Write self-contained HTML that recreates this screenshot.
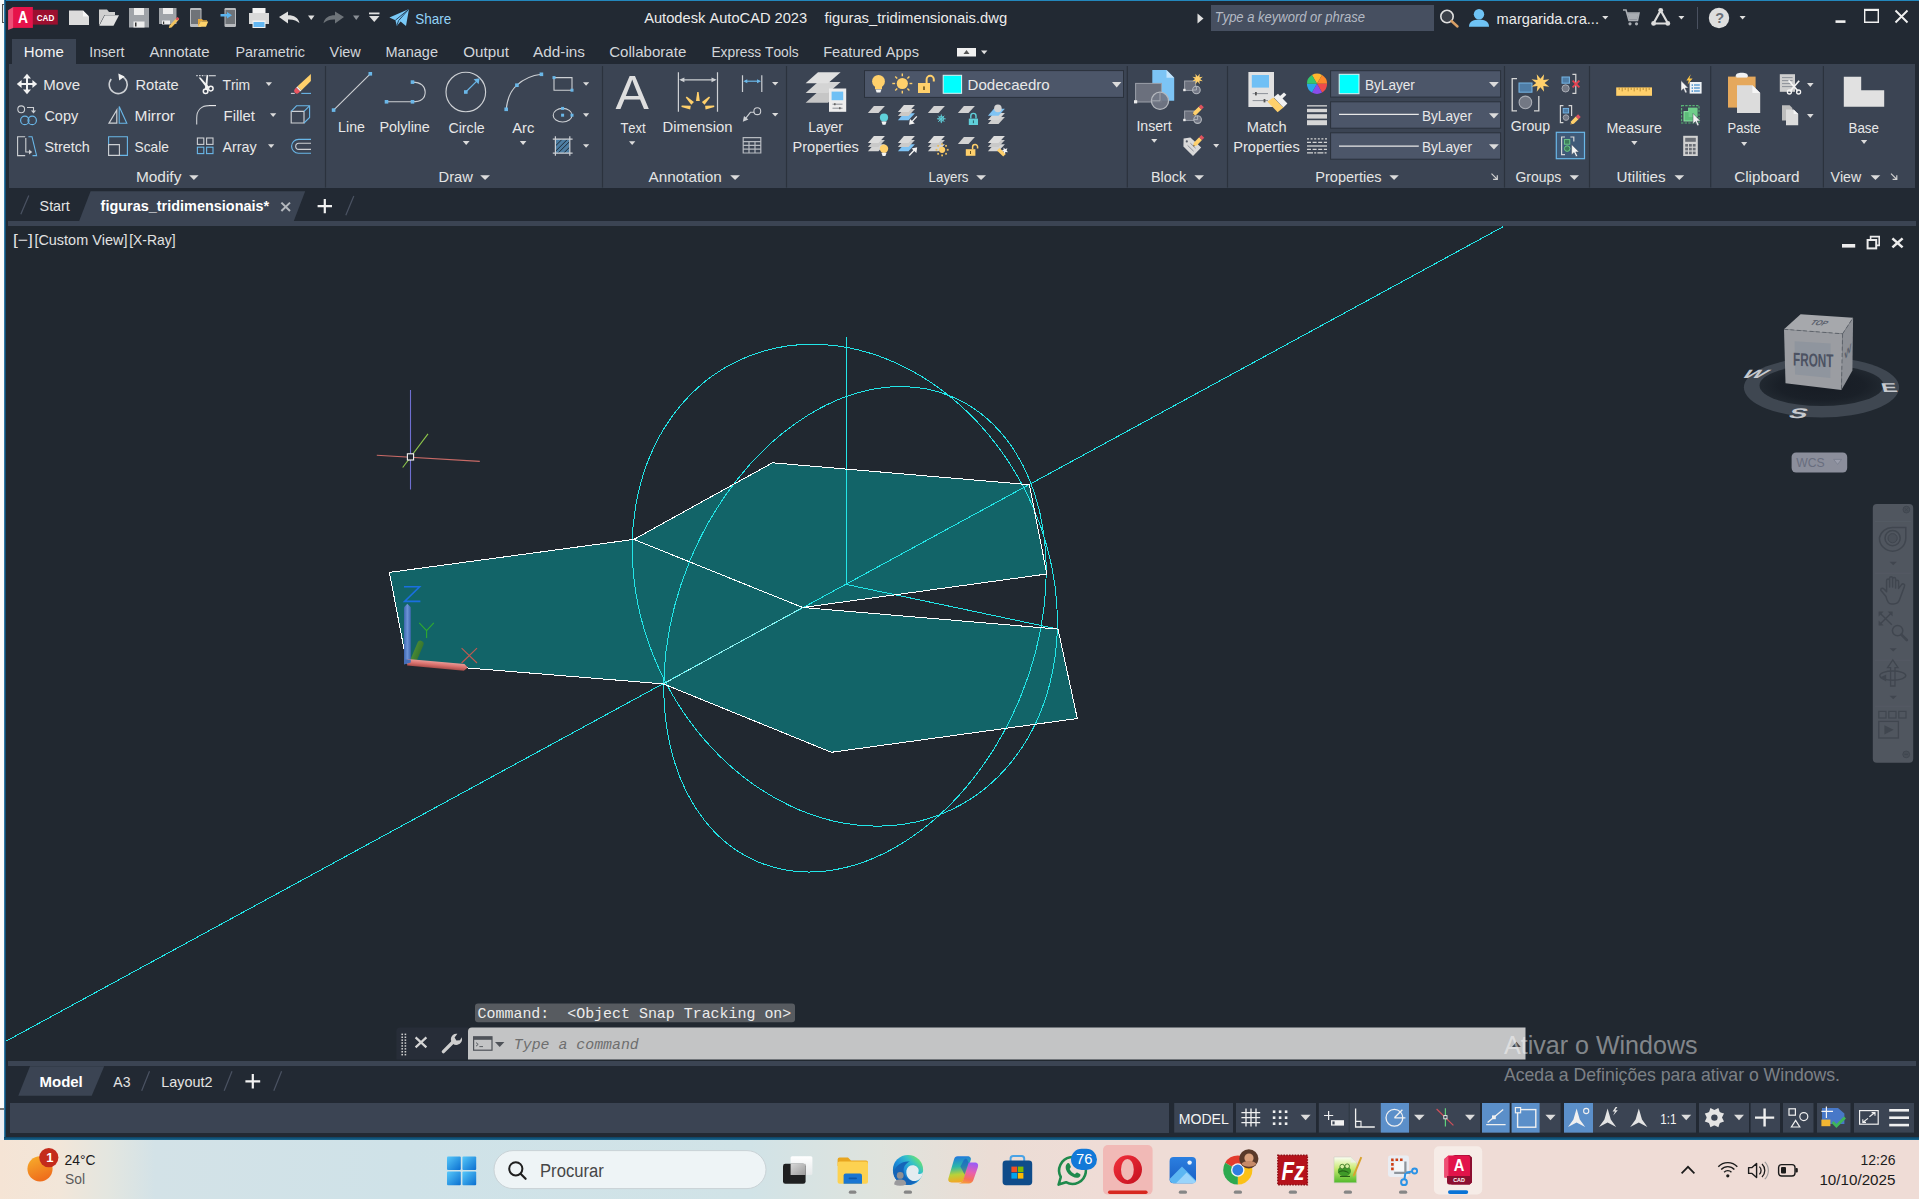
<!DOCTYPE html>
<html lang="en"><head><meta charset="utf-8"><title>Autodesk AutoCAD 2023 - figuras_tridimensionais.dwg</title>
<style>
html,body{margin:0;padding:0;background:#222933;overflow:hidden}
body{width:1919px;height:1199px;position:relative;font-family:'Liberation Sans',sans-serif;font-kerning:none}
div{position:absolute;box-sizing:border-box}
#ov{position:absolute;left:0;top:0}
#ov text{font-family:'Liberation Sans',sans-serif;white-space:pre}
#ov text.mono{font-family:'Liberation Mono',monospace}
</style></head><body>
<div id="win" style="left:0;top:0;width:1919px;height:1139px;background:#222933"></div>
<div id="leftstrip" style="left:0;top:0;width:4px;height:1140px;background:linear-gradient(180deg,#fbfbfb 0,#fbfbfb 1108px,#7a7a7a 1108px,#7a7a7a 1110px,#ededf1 1110px)"></div>
<div id="leftborder" style="left:4px;top:0;width:1.8px;height:1139px;background:linear-gradient(90deg,#4a94c2 0%,#15577f 55%,#0e3c5c 100%)"></div>
<div id="leftmark" style="left:1.5px;top:4px;width:2.5px;height:19px;border:1px solid #555;border-right:none;background:#e8e8e8"></div>
<div id="topborder" style="left:6px;top:0;width:1913px;height:1px;background:#2387bd"></div>
<div id="ribbon" style="left:9px;top:64px;width:1906px;height:124px;background:#3b4453"></div>
<div id="tabstrip" style="left:8px;top:221px;width:1908px;height:5px;background:#3b4453"></div>
<div id="canvas" style="left:6px;top:226px;width:1913px;height:835px;background:#212830"></div>
<div id="cmdstrip" style="left:8px;top:1061px;width:1908px;height:5px;background:#3b4453"></div>
<div id="status" style="left:10px;top:1103px;width:1159px;height:30px;background:#3b4453"></div>
<div id="botborder" style="left:4px;top:1137px;width:1915px;height:3px;background:linear-gradient(180deg,#0f3f5f,#12587f 60%,#1a6a94)"></div>
<div id="taskbar" style="left:0;top:1140px;width:1919px;height:59px;background:linear-gradient(90deg,#f5e4d5 0px,#f2e6d9 60px,#e3e6e0 110px,#d3e2e7 155px,#cfe2e8 400px,#d1e3e7 750px,#dfe3dd 880px,#ebddd5 990px,#efdcd6 1100px,#efdcd6 1919px)"></div>
<svg id="ov" width="1919" height="1199" viewBox="0 0 1919 1199">
<g id="titlebar"><rect x="32.9" y="9.8" width="24.9" height="14.8" fill="#9c0f2f"/><path d="M13 7H32.9V27.9H13Z" fill="#e6134a"/><path d="M8.1 10.2L13.1 7V27.9L8.1 30.1Z" fill="#ee4f77"/><text x="18" y="23" font-size="15.6" fill="#ffffff" font-weight="bold" textLength="10" lengthAdjust="spacingAndGlyphs">A</text><text x="36.7" y="21" font-size="9" fill="#ffffff" font-weight="bold" textLength="17.6" lengthAdjust="spacingAndGlyphs">CAD</text><path d="M69 10.5H83L89 16.5V25H69Z" fill="#dcdcdc"/><path d="M83 10.5L89 16.5H83Z" fill="#f6f6f6"/><path d="M99 9.5H107L109 12H115V15H104.5L99 25.5Z" fill="#d0d0d0"/><path d="M104.8 15.3H119L113.5 25.8H99.3Z" fill="#e0e0e0"/><path d="M129 8H149V27.5H129Z" fill="#9fa3a8"/><rect x="134" y="8" width="10" height="7" fill="#ededed"/><rect x="133.5" y="21.5" width="11" height="6" fill="#ededed"/><rect x="135" y="22.5" width="1.5" height="4" fill="#333"/><path d="M159 8H176.5V24H159Z" fill="#9fa3a8"/><rect x="163" y="8" width="10" height="6" fill="#ededed"/><rect x="162" y="20.5" width="8" height="4" fill="#ededed"/><rect x="163" y="21.5" width="1.2" height="2.5" fill="#333"/><path d="M169.5 25.5L177 17.5L179 19.5L171.5 27.5L168.8 28Z" fill="#f2c45f"/><path d="M175.5 19L177.6 17L179.3 18.6L177.3 20.6Z" fill="#e0525e"/><rect x="190" y="8" width="11.5" height="19" fill="#b9bbbf" rx="1.2"/><rect x="191" y="10" width="9.5" height="14" fill="#6f7378"/><path d="M198 19H202L203 20.2H207V21.5H200.5L198 26.8Z" fill="#e8a93a"/><path d="M200.7 21.6H208.2L206 26.8H198.2Z" fill="#ffd36b"/><rect x="224.5" y="8" width="11.5" height="19" fill="#b9bbbf" rx="1.2"/><rect x="225.5" y="10" width="9.5" height="14" fill="#6f7378"/><path d="M220.5 14H227V12L232 15.2L227 18.4V16.4H220.5Z" fill="#5ab4f0"/><rect x="252.5" y="8" width="13" height="6" fill="#f2f2f2"/><path d="M249 13H269V24H249Z" fill="#d9d9d9" /><rect x="252.5" y="20.5" width="13" height="7.5" fill="#f2f2f2"/><rect x="253.5" y="22" width="11" height="5" fill="#63b7f2"/><path d="M279 17L288 11.5V15.2C294 15.2 298.5 17.5 299.5 23.3C297 20.5 293.5 19.3 288 19.5V23.6Z" fill="#e0e0e0"/><path d="M308 15.6H314.5L311.25 20Z" fill="#e0e0e0"/><path d="M344 17L335 11.5V15.2C329 15.2 324.5 17.5 323.5 23.3C326 20.5 329.5 19.3 335 19.5V23.6Z" fill="#6d7379"/><path d="M353 15.6H359.5L356.25 20Z" fill="#8a8f96"/><rect x="369" y="12.5" width="10.5" height="1.8" fill="#e0e0e0"/><path d="M369 16H379.5L374.25 22Z" fill="#e0e0e0"/><path d="M389.4 17.6L409 8.9L406 26L400.6 21.4L396.8 26L395.4 20.2Z" fill="#79c9f7"/><path d="M395.4 20.2L408.6 9.4M396.8 25.6L398.6 20.6L408.6 9.4" fill="none" stroke="#1d3650" stroke-width="0.9"/><text x="415.2" y="23.6" font-size="15" fill="#93d3f8" textLength="36" lengthAdjust="spacingAndGlyphs">Share</text><text x="644.2" y="22.7" font-size="15" fill="#ececec" textLength="163" lengthAdjust="spacingAndGlyphs">Autodesk AutoCAD 2023</text><text x="824.6" y="22.7" font-size="15" fill="#ececec" textLength="182.6" lengthAdjust="spacingAndGlyphs">figuras_tridimensionais.dwg</text><path d="M1197.5 13.5L1203.5 18.5L1197.5 23.5Z" fill="#e0e0e0"/><rect x="1211" y="5" width="223" height="26" fill="#464f60"/><text x="1214.7" y="22.2" font-size="14.5" fill="#b4bac4" font-style="italic" textLength="150.3" lengthAdjust="spacingAndGlyphs">Type a keyword or phrase</text><circle cx="1447" cy="16.5" r="6.2" fill="#3b4049" stroke="#e0e0e0" stroke-width="1.6"/><line x1="1451.5" y1="21" x2="1457.5" y2="26.5" stroke="#d9a066" stroke-width="2.4" stroke-linecap="round"/><circle cx="1479" cy="14.2" r="5.2" fill="#6fc3f5"/><path d="M1469 26.7C1469 21.5 1473 19.8 1479 19.8C1485 19.8 1489 21.5 1489 26.7Z" fill="#6fc3f5"/><text x="1496.6" y="23.8" font-size="15" fill="#ececec" textLength="102.4" lengthAdjust="spacingAndGlyphs">margarida.cra...</text><path d="M1602.2 16H1608.4L1605.3 19.6Z" fill="#e0e0e0"/><path d="M1623 10H1626L1629 20.5H1637.5L1639 13H1627.2" fill="none" stroke="#a9adb3" stroke-width="1.6"/><path d="M1627.4 13.2H1638.6L1637.3 19.8H1629.2Z" fill="#a9adb3"/><circle cx="1630" cy="23.8" r="1.6" fill="#a9adb3"/><circle cx="1636.5" cy="23.8" r="1.6" fill="#a9adb3"/><path d="M1660.7 10.5L1668 23.5H1653.4Z" fill="none" stroke="#dcdcdc" stroke-width="2.2" stroke-linejoin="round"/><circle cx="1660.7" cy="10.3" r="2.4" fill="#dcdcdc"/><circle cx="1653.6" cy="23.4" r="2.4" fill="#dcdcdc"/><circle cx="1667.8" cy="23.4" r="2.4" fill="#dcdcdc"/><path d="M1678.4 16H1684.4L1681.4 19.6Z" fill="#e0e0e0"/><line x1="1697.5" y1="7" x2="1697.5" y2="29" stroke="#4a5160" stroke-width="1"/><circle cx="1719" cy="18" r="10.2" fill="#dedede"/><text x="1715.2" y="23" font-size="14.5" fill="#6a6f78" font-weight="bold">?</text><path d="M1739.6 16H1745.6L1742.6 19.6Z" fill="#e0e0e0"/><rect x="1835.5" y="20.3" width="10" height="2.6" fill="#f0f0f0"/><path d="M1864.7 10H1878.3V22.3H1864.7Z" fill="none" stroke="#f0f0f0" stroke-width="1.4"/><rect x="1864" y="8.8" width="15" height="2.2" fill="#f0f0f0"/><path d="M1895.5 10.5L1907.5 22.5M1907.5 10.5L1895.5 22.5" fill="none" stroke="#f0f0f0" stroke-width="1.9"/></g>
<g id="ribbon"><rect x="12" y="39" width="64" height="25" fill="#3b4453"/><text x="23.8" y="56.6" font-size="15" fill="#f4f4f4" textLength="40" lengthAdjust="spacingAndGlyphs">Home</text><text x="89.3" y="56.6" font-size="15" fill="#d2d6db" textLength="35.2" lengthAdjust="spacingAndGlyphs">Insert</text><text x="149.5" y="56.6" font-size="15" fill="#d2d6db" textLength="60" lengthAdjust="spacingAndGlyphs">Annotate</text><text x="235.5" y="56.6" font-size="15" fill="#d2d6db" textLength="69.5" lengthAdjust="spacingAndGlyphs">Parametric</text><text x="329.5" y="56.6" font-size="15" fill="#d2d6db" textLength="31.3" lengthAdjust="spacingAndGlyphs">View</text><text x="385.5" y="56.6" font-size="15" fill="#d2d6db" textLength="52.5" lengthAdjust="spacingAndGlyphs">Manage</text><text x="463.3" y="56.6" font-size="15" fill="#d2d6db" textLength="45.6" lengthAdjust="spacingAndGlyphs">Output</text><text x="533.1" y="56.6" font-size="15" fill="#d2d6db" textLength="51.9" lengthAdjust="spacingAndGlyphs">Add-ins</text><text x="609.2" y="56.6" font-size="15" fill="#d2d6db" textLength="77.1" lengthAdjust="spacingAndGlyphs">Collaborate</text><text x="711.4" y="56.6" font-size="15" fill="#d2d6db" textLength="87.3" lengthAdjust="spacingAndGlyphs">Express Tools</text><text x="823.2" y="56.6" font-size="15" fill="#d2d6db" textLength="95.8" lengthAdjust="spacingAndGlyphs">Featured Apps</text><rect x="957" y="48" width="19" height="8.5" fill="#f0f0f0"/><path d="M963.5 54L966.5 50L969.5 54Z" fill="#555"/><path d="M981 50.5H987.4L984.2 54.2Z" fill="#e0e0e0"/><line x1="325.5" y1="66" x2="325.5" y2="187.6" stroke="#2b323d" stroke-width="1.2"/><line x1="602.5" y1="66" x2="602.5" y2="187.6" stroke="#2b323d" stroke-width="1.2"/><line x1="786.5" y1="66" x2="786.5" y2="187.6" stroke="#2b323d" stroke-width="1.2"/><line x1="1127.3" y1="66" x2="1127.3" y2="187.6" stroke="#2b323d" stroke-width="1.2"/><line x1="1227.5" y1="66" x2="1227.5" y2="187.6" stroke="#2b323d" stroke-width="1.2"/><line x1="1504.5" y1="66" x2="1504.5" y2="187.6" stroke="#2b323d" stroke-width="1.2"/><line x1="1589.5" y1="66" x2="1589.5" y2="187.6" stroke="#2b323d" stroke-width="1.2"/><line x1="1710.7" y1="66" x2="1710.7" y2="187.6" stroke="#2b323d" stroke-width="1.2"/><line x1="1823.4" y1="66" x2="1823.4" y2="187.6" stroke="#2b323d" stroke-width="1.2"/><text x="135.9" y="181.6" font-size="15" fill="#e4e4e4" textLength="45.5" lengthAdjust="spacingAndGlyphs">Modify</text><path d="M189.2 175.2H198.6L193.9 180Z" fill="#dcdcdc"/><text x="438.6" y="181.6" font-size="15" fill="#e4e4e4" textLength="34.3" lengthAdjust="spacingAndGlyphs">Draw</text><path d="M480.2 175.2H490L485.1 180Z" fill="#dcdcdc"/><text x="648.5" y="181.6" font-size="15" fill="#e4e4e4" textLength="73.2" lengthAdjust="spacingAndGlyphs">Annotation</text><path d="M730.2 175.2H740L735.1 180Z" fill="#dcdcdc"/><text x="928.6" y="181.6" font-size="15" fill="#e4e4e4" textLength="39.9" lengthAdjust="spacingAndGlyphs">Layers</text><path d="M976.2 175.2H986L981.1 180Z" fill="#dcdcdc"/><text x="1151" y="181.6" font-size="15" fill="#e4e4e4" textLength="35.2" lengthAdjust="spacingAndGlyphs">Block</text><path d="M1194.4 175.2H1204L1199.2 180Z" fill="#dcdcdc"/><text x="1315.3" y="181.6" font-size="15" fill="#e4e4e4" textLength="66.3" lengthAdjust="spacingAndGlyphs">Properties</text><path d="M1389.4 175.2H1398.8L1394.1 180Z" fill="#dcdcdc"/><text x="1515.4" y="181.6" font-size="15" fill="#e4e4e4" textLength="46" lengthAdjust="spacingAndGlyphs">Groups</text><path d="M1569.6 175.2H1579L1574.3 180Z" fill="#dcdcdc"/><text x="1616.6" y="181.6" font-size="15" fill="#e4e4e4" textLength="49.1" lengthAdjust="spacingAndGlyphs">Utilities</text><path d="M1674.5 175.2H1684.2L1679.35 180Z" fill="#dcdcdc"/><text x="1734.2" y="181.6" font-size="15" fill="#e4e4e4" textLength="65.4" lengthAdjust="spacingAndGlyphs">Clipboard</text><text x="1830.5" y="181.6" font-size="15" fill="#e4e4e4" textLength="30.7" lengthAdjust="spacingAndGlyphs">View</text><path d="M1870.6 175.2H1880.3L1875.45 180Z" fill="#dcdcdc"/><path d="M1491.5 173.6L1497.0 179.1M1493.1 179.4H1497.3V175.2" fill="none" stroke="#d0d0d0" stroke-width="1.2"/><path d="M1891 173.6L1896.5 179.1M1892.6 179.4H1896.8V175.2" fill="none" stroke="#d0d0d0" stroke-width="1.2"/><text x="43.3" y="89.8" font-size="15" fill="#e8e8e8" textLength="36.7" lengthAdjust="spacingAndGlyphs">Move</text><text x="44.4" y="120.7" font-size="15" fill="#e8e8e8" textLength="33.8" lengthAdjust="spacingAndGlyphs">Copy</text><text x="44.4" y="151.7" font-size="15" fill="#e8e8e8" textLength="45.4" lengthAdjust="spacingAndGlyphs">Stretch</text><text x="135.5" y="89.8" font-size="15" fill="#e8e8e8" textLength="43.3" lengthAdjust="spacingAndGlyphs">Rotate</text><text x="134.5" y="120.7" font-size="15" fill="#e8e8e8" textLength="40.5" lengthAdjust="spacingAndGlyphs">Mirror</text><text x="134.5" y="151.7" font-size="15" fill="#e8e8e8" textLength="34.4" lengthAdjust="spacingAndGlyphs">Scale</text><text x="222.4" y="89.8" font-size="15" fill="#e8e8e8" textLength="27.8" lengthAdjust="spacingAndGlyphs">Trim</text><text x="223.6" y="120.7" font-size="15" fill="#e8e8e8" textLength="31.3" lengthAdjust="spacingAndGlyphs">Fillet</text><text x="222.4" y="151.7" font-size="15" fill="#e8e8e8" textLength="34.2" lengthAdjust="spacingAndGlyphs">Array</text><path d="M265.7 82.2H272L268.85 86Z" fill="#dcdcdc"/><path d="M270 113.2H276.3L273.15 117Z" fill="#dcdcdc"/><path d="M268 144.2H274.3L271.15 148Z" fill="#dcdcdc"/><path d="M27 75.5V92.5M18.5 84H35.5" fill="none" stroke="#f2f2f2" stroke-width="2"/><path d="M27 73.8L31 78.6H23ZM27 94.2L31 89.4H23ZM16.8 84L21.6 80V88ZM37.2 84L32.4 80V88Z" fill="#f2f2f2"/><circle cx="21.2" cy="109.3" r="3.4" fill="none" stroke="#cdd0d4" stroke-width="1.1"/><path d="M27 107.5H33.5V111" fill="none" stroke="#cdd0d4" stroke-width="1.1"/><path d="M30.9 110.5H36.1L33.5 113.6Z" fill="#cdd0d4"/><circle cx="24.8" cy="120.4" r="4.2" fill="none" stroke="#6ab7e8" stroke-width="1.2"/><circle cx="32.2" cy="120.4" r="4.2" fill="none" stroke="#6ab7e8" stroke-width="1.2"/><path d="M25.2 136.7H17.6V155.6H25.2" fill="none" stroke="#cdd0d4" stroke-width="1.1"/><path d="M28.4 136.7H32L36.6 155.6H32.5" fill="none" stroke="#6ab7e8" stroke-width="1.1"/><path d="M25.8 138V152H29.5" fill="none" stroke="#cdd0d4" stroke-width="1.1"/><path d="M29 149.5L32.2 152L29 154.5Z" fill="#cdd0d4"/><path d="M121.5 76.2A9 9 0 1 1 111.2 79" fill="none" stroke="#cdd0d4" stroke-width="1.6"/><path d="M118.3 73.6L124.6 76.4L119.2 80.4Z" fill="#f2f2f2"/><path d="M116.8 110L109 123.2H116.8Z" fill="none" stroke="#cdd0d4" stroke-width="1.2"/><path d="M119.2 106.4L126.8 123.2H119.2Z" fill="none" stroke="#6ab7e8" stroke-width="1.1"/><path d="M108.6 136.7H127.4V155.4H108.6Z" fill="none" stroke="#6ab7e8" stroke-width="1.1"/><path d="M108.6 144.6H119.4V155.4H108.6Z" fill="#3b4453" stroke="#cdd0d4" stroke-width="1.1"/><line x1="196.2" y1="75.7" x2="205.4" y2="75.7" stroke="#cdd0d4" stroke-width="1.2" stroke-dasharray="1.6 1.2"/><line x1="208.8" y1="75.7" x2="215.8" y2="75.7" stroke="#cdd0d4" stroke-width="1.2"/><path d="M198.6 77.6L200.6 77.4L209.6 87.4L207.6 89.2Z" fill="#f4f4f4"/><path d="M206.6 74.8L208.2 75.2L207 89.6L204.8 89.8Z" fill="#f4f4f4"/><circle cx="205.6" cy="91.2" r="2.3" fill="none" stroke="#f4f4f4" stroke-width="1.5"/><circle cx="210.8" cy="88.6" r="2.3" fill="none" stroke="#f4f4f4" stroke-width="1.5"/><path d="M196.7 124.5V118C196.7 110 201.5 105.6 209 105.6" fill="none" stroke="#cdd0d4" stroke-width="1.1"/><line x1="209" y1="105.6" x2="216" y2="105.6" stroke="#f2f2f2" stroke-width="1.1"/><rect x="197.4" y="138" width="6.4" height="6.4" fill="none" stroke="#cdd0d4" stroke-width="1.1"/><rect x="206.6" y="138" width="6.4" height="6.4" fill="none" stroke="#cdd0d4" stroke-width="1.1"/><rect x="197.4" y="147.2" width="6.4" height="6.4" fill="none" stroke="#6ab7e8" stroke-width="1.1"/><rect x="206.6" y="147.2" width="6.4" height="6.4" fill="none" stroke="#6ab7e8" stroke-width="1.1"/><path d="M310.9 74.1V81L301.3 90.4L297.3 86.4Z" fill="#ffd06b"/><path d="M297.3 86.4L301.3 90.4L300.2 91.5L296.2 87.5Z" fill="#f6f6f6"/><path d="M296.2 87.5L300.2 91.5L298.8 92.8A2.8 2.8 0 0 1 294.8 88.9Z" fill="#ea5560"/><line x1="290.9" y1="93.4" x2="294.8" y2="93.4" stroke="#cdd0d4" stroke-width="1.1"/><line x1="301.3" y1="93.4" x2="311" y2="93.4" stroke="#6ab7e8" stroke-width="1.1"/><path d="M291.2 111.3H304V123H291.2Z" fill="none" stroke="#cdd0d4" stroke-width="1.15"/><path d="M291.2 111.3L296.5 105.8H309.6V117.5L304 123M304 111.3L309.6 105.8" fill="none" stroke="#6ab7e8" stroke-width="1.1"/><path d="M311 139.4H298.5A6.9 6.9 0 0 0 298.5 153.2H311" fill="none" stroke="#6ab7e8" stroke-width="1.1"/><path d="M311 143.2H298.8A3.1 3.1 0 0 0 298.8 149.4H311" fill="none" stroke="#cdd0d4" stroke-width="1.1"/><line x1="333.6" y1="110.1" x2="370.3" y2="73.8" stroke="#cdd0d4" stroke-width="1.1"/><rect x="331.8" y="108.3" width="3.6" height="3.6" fill="#6ab7e8"/><rect x="368.5" y="72" width="3.6" height="3.6" fill="#6ab7e8"/><text x="338.1" y="131.8" font-size="15" fill="#e8e8e8" textLength="26.8" lengthAdjust="spacingAndGlyphs">Line</text><path d="M386.5 101.8H412.5C422 101.8 425.2 97 425.2 92C425.2 87 421.5 82.1 412.5 82.1" fill="none" stroke="#cdd0d4" stroke-width="1.1"/><rect x="384.7" y="100" width="3.6" height="3.6" fill="#6ab7e8"/><rect x="410.7" y="100" width="3.6" height="3.6" fill="#6ab7e8"/><rect x="410.7" y="80.3" width="3.6" height="3.6" fill="#6ab7e8"/><text x="379.4" y="131.8" font-size="15" fill="#e8e8e8" textLength="50.5" lengthAdjust="spacingAndGlyphs">Polyline</text><circle cx="465.8" cy="92" r="19.8" fill="none" stroke="#cdd0d4" stroke-width="1.15"/><line x1="465.8" y1="92" x2="477" y2="80.8" stroke="#6ab7e8" stroke-width="1.2"/><path d="M479.6 78.2L478.6 84.2L473.6 79.2Z" fill="#6ab7e8"/><rect x="464" y="90.2" width="3.6" height="3.6" fill="#6ab7e8"/><text x="448.5" y="132.8" font-size="15" fill="#e8e8e8" textLength="36.2" lengthAdjust="spacingAndGlyphs">Circle</text><path d="M462.8 141H469.6L466.2 145Z" fill="#dcdcdc"/><path d="M506.2 109.3C507.5 97 511.5 90 516.9 85.2C523 79.5 531 75.5 541.4 74.3" fill="none" stroke="#cdd0d4" stroke-width="1.1"/><rect x="504.4" y="107.5" width="3.6" height="3.6" fill="#6ab7e8"/><rect x="515.1" y="83.4" width="3.6" height="3.6" fill="#6ab7e8"/><rect x="539.6" y="72.5" width="3.6" height="3.6" fill="#6ab7e8"/><text x="512.2" y="132.8" font-size="15" fill="#e8e8e8" textLength="22.1" lengthAdjust="spacingAndGlyphs">Arc</text><path d="M519.8 141H526.4L523.1 145Z" fill="#dcdcdc"/><path d="M554 77.6H572V90.2H554Z" fill="none" stroke="#cdd0d4" stroke-width="1.1"/><rect x="552.5" y="76.1" width="3" height="3" fill="#6ab7e8"/><rect x="570.5" y="88.7" width="3" height="3" fill="#6ab7e8"/><path d="M583 82.2H589.2L586.1 85.8Z" fill="#dcdcdc"/><ellipse cx="562.6" cy="115.2" rx="9.4" ry="6.8" fill="none" stroke="#cdd0d4" stroke-width="1.1"/><rect x="561.1" y="106.9" width="3" height="3" fill="#6ab7e8"/><rect x="561.1" y="113.7" width="3" height="3" fill="#6ab7e8"/><rect x="570.5" y="113.7" width="3" height="3" fill="#6ab7e8"/><path d="M583 113.2H589.2L586.1 116.9Z" fill="#dcdcdc"/><rect x="555.4" y="139.2" width="14.4" height="14" fill="#4d7ea3"/><path d="M555.4 146L562.2 139.2M555.4 151.4L567.6 139.2M558 153.2L569.8 141.4M563.6 153.2L569.8 147" fill="none" stroke="#1f2a36" stroke-width="1"/><path d="M555.4 136.3V155.8M569.8 136.3V155.8M552.8 139.2H572.6M552.8 153.2H572.6" fill="none" stroke="#cdd0d4" stroke-width="1.2"/><path d="M583 144.2H589.2L586.1 147.8Z" fill="#dcdcdc"/><text x="615.6" y="109.3" font-size="49" fill="#dedede" textLength="33.4" lengthAdjust="spacingAndGlyphs">A</text><text x="620.4" y="132.7" font-size="15" fill="#e8e8e8" textLength="25.3" lengthAdjust="spacingAndGlyphs">Text</text><path d="M629 141.2H635.3L632.15 145Z" fill="#dcdcdc"/><path d="M678.4 72.2V111.8M717.5 72.2V111.8M681 79.8H715" fill="none" stroke="#cdd0d4" stroke-width="1.2"/><path d="M679.2 79.8L684.4 77.4V82.2ZM716.7 79.8L711.5 77.4V82.2Z" fill="#cdd0d4"/><path d="M699.8 101.1L698.6 92.1L697.2 92.1L696 101.1Z" fill="#ffd06b"/><path d="M704.55 104.64L710.06 97.43L709.07 96.44L701.86 101.95Z" fill="#ffd06b"/><path d="M693.94 101.95L686.73 96.44L685.74 97.43L691.25 104.64Z" fill="#ffd06b"/><path d="M705.59 109.44L714.34 107L714.14 105.61L705.06 105.67Z" fill="#ffd06b"/><path d="M690.74 105.67L681.66 105.61L681.46 107L690.21 109.44Z" fill="#ffd06b"/><text x="662.6" y="132.3" font-size="15" fill="#e8e8e8" textLength="69.9" lengthAdjust="spacingAndGlyphs">Dimension</text><path d="M742.5 75.3V92M761.8 75.3V92" fill="none" stroke="#cdd0d4" stroke-width="1.2"/><line x1="745" y1="81.2" x2="759.4" y2="81.2" stroke="#6ab7e8" stroke-width="1.2"/><path d="M743.3 81.2L747.3 79.2V83.2ZM761 81.2L757 79.2V83.2Z" fill="#6ab7e8"/><path d="M772 82.1H778.4L775.2 85.5Z" fill="#dcdcdc"/><circle cx="757.3" cy="111.2" r="3.4" fill="none" stroke="#cdd0d4" stroke-width="1.1"/><path d="M754.2 112.3H750.4L745 119.2" fill="none" stroke="#cdd0d4" stroke-width="1.1"/><path d="M742.8 121.8L744 116L748.4 119.4Z" fill="#cdd0d4"/><path d="M772 113H778.4L775.2 116.4Z" fill="#dcdcdc"/><path d="M743.2 137.6H760.8V153H743.2ZM743.2 141.6H760.8M743.2 145.4H760.8M743.2 149.2H760.8M749 141.6V153M755 141.6V153" fill="none" stroke="#b6bac0" stroke-width="1.2"/><path d="M818 91.8H840.6L828 102.8H805.6Z" fill="#c6c6c6"/><path d="M818 82H840.6L828 93H805.6Z" fill="#d4d4d4"/><path d="M818 72.2H840.6L828 83.2H805.6Z" fill="#e0e0e0"/><rect x="829" y="88.5" width="17.2" height="23.3" fill="#ededed"/><rect x="831.6" y="91.6" width="11.6" height="8.6" fill="#6fc0f5"/><path d="M832.5 104.2H842.5M832.5 108.2H842.5" fill="none" stroke="#8a8f96" stroke-width="1"/><rect x="834" y="103.2" width="1.6" height="2" fill="#666"/><rect x="839" y="107.2" width="1.6" height="2" fill="#666"/><text x="808.2" y="132.3" font-size="15" fill="#e8e8e8" textLength="34.8" lengthAdjust="spacingAndGlyphs">Layer</text><text x="792.5" y="151.6" font-size="15" fill="#e8e8e8" textLength="66.4" lengthAdjust="spacingAndGlyphs">Properties</text><rect x="864.5" y="70.6" width="259" height="26.8" fill="#4c5669" stroke="#2a313c" stroke-width="1"/><circle cx="878.5" cy="81.4" r="6.4" fill="#ffd06b"/><path d="M875 86H882V89.2H875Z" fill="#ffd06b"/><path d="M875.6 89.6H881.4L880.4 92.6H876.6Z" fill="#f4f4f4"/><circle cx="902.3" cy="83.5" r="5.6" fill="#ffd06b"/><line x1="909.5" y1="83.5" x2="912.3" y2="83.5" stroke="#ffd06b" stroke-width="1.4"/><line x1="907.39" y1="88.59" x2="909.37" y2="90.57" stroke="#ffd06b" stroke-width="1.4"/><line x1="902.3" y1="90.7" x2="902.3" y2="93.5" stroke="#ffd06b" stroke-width="1.4"/><line x1="897.21" y1="88.59" x2="895.23" y2="90.57" stroke="#ffd06b" stroke-width="1.4"/><line x1="895.1" y1="83.5" x2="892.3" y2="83.5" stroke="#ffd06b" stroke-width="1.4"/><line x1="897.21" y1="78.41" x2="895.23" y2="76.43" stroke="#ffd06b" stroke-width="1.4"/><line x1="902.3" y1="76.3" x2="902.3" y2="73.5" stroke="#ffd06b" stroke-width="1.4"/><line x1="907.39" y1="78.41" x2="909.37" y2="76.43" stroke="#ffd06b" stroke-width="1.4"/><rect x="918" y="83" width="12" height="10" fill="#ffd06b"/><path d="M926.6 83V79.4A3.6 3.6 0 0 1 933.8 79.4V81.6" fill="none" stroke="#ffd06b" stroke-width="2"/><rect x="923.2" y="86.4" width="1.6" height="3.6" fill="#6b5520"/><rect x="943.2" y="75.3" width="18.4" height="18" fill="#00ffff" stroke="#d8f4f4" stroke-width="1"/><text x="967.6" y="89.8" font-size="15" fill="#e8e8e8" textLength="82.1" lengthAdjust="spacingAndGlyphs">Dodecaedro</text><path d="M1112 81.9H1121.4L1116.7 87.4Z" fill="#dcdcdc"/><path d="M873.9 106H884.9L878.5 113H867.9Z" fill="#d2d2d2"/><circle cx="884" cy="117.6" r="4.1" fill="#5fd0da"/><path d="M881.4 121.4H886.6L885.4 124.8H882.6Z" fill="#f4f4f4"/><path d="M903.9 113.2H914.9L908.5 120.2H897.9Z" fill="#7fc3f4"/><path d="M903.9 109.1H914.9L908.5 116.1H897.9Z" fill="#cdc9c6"/><path d="M903.9 105H914.9L908.5 112H897.9Z" fill="#dadada"/><line x1="916.8" y1="116.4" x2="912" y2="121.6" stroke="#f4f4f4" stroke-width="1.4"/><path d="M909 124.8L910 119L914.8 123.4Z" fill="#f4f4f4"/><path d="M933.9 106H944.9L938.5 113H927.9Z" fill="#d2d2d2"/><line x1="937" y1="118.8" x2="945.6" y2="118.8" stroke="#5fd0da" stroke-width="1"/><line x1="938.26" y1="115.76" x2="944.34" y2="121.84" stroke="#5fd0da" stroke-width="1"/><line x1="941.3" y1="114.5" x2="941.3" y2="123.1" stroke="#5fd0da" stroke-width="1"/><line x1="944.34" y1="115.76" x2="938.26" y2="121.84" stroke="#5fd0da" stroke-width="1"/><circle cx="941.3" cy="118.8" r="2.4" fill="none" stroke="#5fd0da" stroke-width="0.9"/><path d="M963.9 106H974.9L968.5 113H957.9Z" fill="#d2d2d2"/><rect x="968.8" y="118.6" width="9.2" height="6.4" fill="#5fd0da"/><path d="M970.8 118.6V116A2.6 2.6 0 0 1 976 116V118.6" fill="none" stroke="#5fd0da" stroke-width="1.4"/><rect x="972.9" y="120.4" width="1" height="2.8" fill="#2b5f66"/><path d="M993.9 117H1004.9L998.5 124H987.9Z" fill="#cfcfcf"/><path d="M993.9 112.9H1004.9L998.5 119.9H987.9Z" fill="#d6d6d6"/><path d="M993.9 108.8H1004.9L998.5 115.8H987.9Z" fill="#7fc3f4"/><circle cx="997.9" cy="108.4" r="3.8" fill="#d2d2d2"/><path d="M873.9 144.2H884.9L878.5 151.2H867.9Z" fill="#d4d4d4"/><path d="M873.9 140.1H884.9L878.5 147.1H867.9Z" fill="#c9c9c9"/><path d="M873.9 136H884.9L878.5 143H867.9Z" fill="#dcdcdc"/><circle cx="884" cy="148.8" r="4.2" fill="#ffd06b"/><path d="M881.4 152.8H886.6L885.4 156H882.6Z" fill="#f4f4f4"/><path d="M903.9 144.2H914.9L908.5 151.2H897.9Z" fill="#7fc3f4"/><path d="M903.9 140.1H914.9L908.5 147.1H897.9Z" fill="#cbcbcb"/><path d="M903.9 136H914.9L908.5 143H897.9Z" fill="#dadada"/><line x1="909.2" y1="155.4" x2="914.6" y2="149.8" stroke="#f4f4f4" stroke-width="1.4"/><path d="M917.2 147.2L916.4 153L911.6 148.4Z" fill="#f4f4f4"/><path d="M933.9 144.2H944.9L938.5 151.2H927.9Z" fill="#d4d4d4"/><path d="M933.9 140.1H944.9L938.5 147.1H927.9Z" fill="#c9c9c9"/><path d="M933.9 136H944.9L938.5 143H927.9Z" fill="#dcdcdc"/><circle cx="942.1" cy="149.8" r="3.1" fill="#ffd06b"/><rect x="946.8" y="148.9" width="1.8" height="1.8" fill="#e9bd5e"/><rect x="945.16" y="152.86" width="1.8" height="1.8" fill="#e9bd5e"/><rect x="941.2" y="154.5" width="1.8" height="1.8" fill="#e9bd5e"/><rect x="937.24" y="152.86" width="1.8" height="1.8" fill="#e9bd5e"/><rect x="935.6" y="148.9" width="1.8" height="1.8" fill="#e9bd5e"/><rect x="937.24" y="144.94" width="1.8" height="1.8" fill="#e9bd5e"/><rect x="941.2" y="143.3" width="1.8" height="1.8" fill="#e9bd5e"/><rect x="945.16" y="144.94" width="1.8" height="1.8" fill="#e9bd5e"/><path d="M963.9 137H974.9L968.5 144H957.9Z" fill="#d2d2d2"/><rect x="965.8" y="149.2" width="9.6" height="6.6" fill="#ffd06b"/><path d="M972.6 149.2V147A2.5 2.5 0 0 1 977.6 147V148.4" fill="none" stroke="#ffd06b" stroke-width="1.5"/><rect x="970" y="151" width="1" height="3" fill="#6b5520"/><path d="M993.9 144.2H1004.9L998.5 151.2H987.9Z" fill="#d4d4d4"/><path d="M993.9 140.1H1004.9L998.5 147.1H987.9Z" fill="#c9c9c9"/><path d="M993.9 136H1004.9L998.5 143H987.9Z" fill="#dcdcdc"/><path d="M997 150.4L999.6 148L1005.8 154L1003.2 156.6Z" fill="#ffd06b"/><path d="M1003.4 147.6L1005.2 149L1007.4 148.2L1006.6 150.4L1008 152.2L1005.6 152L1004.2 154L1003.8 151.6L1001.6 150.8L1003.6 149.8Z" fill="#f4f4f4"/></g>
<g id="ribbon2"><path d="M1152.3 70H1166.5L1174.2 77.7V100.7H1152.3Z" fill="#7cc4f5"/><path d="M1166.5 70L1174.2 77.7H1166.5Z" fill="#c4e4fb"/><rect x="1135.6" y="83.4" width="25.8" height="18.6" fill="#6b707d" stroke="#9b9fa9" stroke-width="1"/><circle cx="1160" cy="100.8" r="8.6" fill="#727785" stroke="#b4b8be" stroke-width="1.3" fill-opacity="0.92"/><path d="M1160 92.2V100.8H1151.4" fill="none" stroke="#a4a8b0" stroke-width="1"/><rect x="1134" y="100.2" width="3.2" height="3.2" fill="#ececec"/><text x="1136.4" y="130.6" font-size="15" fill="#e8e8e8" textLength="35.3" lengthAdjust="spacingAndGlyphs">Insert</text><path d="M1151.2 139H1157.3L1154.25 142.7Z" fill="#dcdcdc"/><rect x="1184.6" y="81" width="11" height="9.4" fill="#6b707d" stroke="#9b9fa9" stroke-width="1"/><rect x="1183.2" y="88.8" width="2.4" height="2.4" fill="#ececec"/><circle cx="1196.4" cy="90" r="3.8" fill="#727785" stroke="#b4b8be" stroke-width="1.1"/><path d="M1196.4 86.2V90H1192.6" fill="none" stroke="#b4b8be" stroke-width="0.9"/><path d="M1202.77 81.14L1199.44 80.84L1199.74 84.17L1197.6 81.6L1195.46 84.17L1195.76 80.84L1192.43 81.14L1195 79L1192.43 76.86L1195.76 77.16L1195.46 73.83L1197.6 76.4L1199.74 73.83L1199.44 77.16L1202.77 76.86L1200.2 79Z" fill="#ffd06b"/><rect x="1184.6" y="111" width="11" height="9.4" fill="#6b707d" stroke="#9b9fa9" stroke-width="1"/><rect x="1183.2" y="118.8" width="2.4" height="2.4" fill="#ececec"/><circle cx="1197.6" cy="119.6" r="3.8" fill="#727785" stroke="#b4b8be" stroke-width="1.1"/><path d="M1197.6 115.8V119.6H1193.8" fill="none" stroke="#b4b8be" stroke-width="0.9"/><path d="M1192.8 115.4L1196.34 114.69L1201.55 109.48L1198.72 106.65L1193.51 111.86Z" fill="#ffd06b"/><path d="M1201.55 109.48L1203.81 107.21L1200.99 104.39L1198.72 106.65Z" fill="#e0525e"/><path d="M1192.8 115.4L1194.57 115.05L1193.15 113.63Z" fill="#5a4a3a"/><path d="M1183.6 138.4L1190.4 137.6L1201.2 147.4L1193 156L1183.4 146.6Z" fill="#d9d9d9"/><circle cx="1186.8" cy="141.4" r="1.1" fill="#555b66"/><path d="M1187.6 145.4L1193.6 151.2M1190.4 143.2L1195.6 148.2" fill="none" stroke="#8d9199" stroke-width="1"/><path d="M1193.2 146.4L1196.72 145.62L1202.03 140.09L1199.14 137.32L1193.83 142.85Z" fill="#ffd06b"/><path d="M1202.03 140.09L1204.24 137.79L1201.36 135.01L1199.14 137.32Z" fill="#e0525e"/><path d="M1193.2 146.4L1194.96 146.01L1193.52 144.63Z" fill="#5a4a3a"/><path d="M1213.2 144H1219.2L1216.2 147.8Z" fill="#dcdcdc"/><rect x="1248.4" y="72" width="25.6" height="35" fill="#e1e1e1"/><rect x="1251.8" y="75" width="17.2" height="12.6" fill="#70c0f5"/><path d="M1252.6 93.6H1268M1252.6 100.6H1268" fill="none" stroke="#8d9199" stroke-width="1"/><rect x="1255" y="92" width="1.8" height="3.4" fill="#555"/><rect x="1263.6" y="99" width="1.8" height="3.4" fill="#555"/><path d="M1267.4 101.6L1273.4 97.4L1283.4 107.6L1277.6 112.2Z" fill="#ffd06b"/><path d="M1273.6 97.2L1278 93.8L1287.4 103.6L1283.4 107.4Z" fill="#f1f1f1"/><path d="M1279.4 96.4L1284 92.4L1286.4 94.8L1282 99Z" fill="#f1f1f1"/><text x="1246.7" y="131.7" font-size="15" fill="#e8e8e8" textLength="39.9" lengthAdjust="spacingAndGlyphs">Match</text><text x="1233.3" y="151.6" font-size="15" fill="#e8e8e8" textLength="66.4" lengthAdjust="spacingAndGlyphs">Properties</text><path d="M1317 83.8L1311.95 75.05A10.1 10.1 0 0 1 1322.05 75.05Z" fill="#ffb52e"/><path d="M1317 83.8L1322.05 75.05A10.1 10.1 0 0 1 1327.1 83.8Z" fill="#ff8a2b"/><path d="M1317 83.8L1327.1 83.8A10.1 10.1 0 0 1 1322.05 92.55Z" fill="#ef4b4b"/><path d="M1317 83.8L1322.05 92.55A10.1 10.1 0 0 1 1311.95 92.55Z" fill="#8a4dea"/><path d="M1317 83.8L1311.95 92.55A10.1 10.1 0 0 1 1306.9 83.8Z" fill="#2aa7e8"/><path d="M1317 83.8L1306.9 83.8A10.1 10.1 0 0 1 1311.95 75.05Z" fill="#35c86b"/><rect x="1307" y="105.2" width="20" height="1.3" fill="#d6d6d6"/><rect x="1307" y="108.8" width="20" height="3.4" fill="#d6d6d6"/><rect x="1307" y="114.2" width="20" height="4.4" fill="#d6d6d6"/><rect x="1307" y="120.2" width="20" height="5" fill="#d6d6d6"/><line x1="1307" y1="138.8" x2="1327" y2="138.8" stroke="#d6d6d6" stroke-width="1.2" stroke-dasharray="2 1.6"/><line x1="1307" y1="142.4" x2="1327" y2="142.4" stroke="#d6d6d6" stroke-width="1.3" stroke-dasharray="4 1.6"/><line x1="1307" y1="146" x2="1327" y2="146" stroke="#d6d6d6" stroke-width="1.3"/><line x1="1307" y1="149.4" x2="1327" y2="149.4" stroke="#d6d6d6" stroke-width="1.3" stroke-dasharray="4 1.6"/><line x1="1307" y1="152.8" x2="1327" y2="152.8" stroke="#d6d6d6" stroke-width="1.3" stroke-dasharray="6 1.2 2 1.2"/><rect x="1330.6" y="70.7" width="170" height="26.4" fill="#4c5669" stroke="#2a313c" stroke-width="1"/><rect x="1330.6" y="101.8" width="170" height="26.4" fill="#4c5669" stroke="#2a313c" stroke-width="1"/><rect x="1330.6" y="132.8" width="170" height="26.4" fill="#4c5669" stroke="#2a313c" stroke-width="1"/><rect x="1339.2" y="74.3" width="19.8" height="19.4" fill="#00ffff" stroke="#d8f4f4" stroke-width="1"/><text x="1364.9" y="89.8" font-size="15" fill="#e8e8e8" textLength="50" lengthAdjust="spacingAndGlyphs">ByLayer</text><line x1="1339" y1="114.4" x2="1418.8" y2="114.4" stroke="#e8e8e8" stroke-width="1.1"/><text x="1421.9" y="120.7" font-size="15" fill="#e8e8e8" textLength="50.1" lengthAdjust="spacingAndGlyphs">ByLayer</text><line x1="1339" y1="146.1" x2="1418.8" y2="146.1" stroke="#e8e8e8" stroke-width="1.1"/><text x="1421.9" y="151.6" font-size="15" fill="#e8e8e8" textLength="50.1" lengthAdjust="spacingAndGlyphs">ByLayer</text><path d="M1489 82.1H1498.8L1493.9 87.3Z" fill="#dcdcdc"/><path d="M1489 113.3H1498.8L1493.9 118.5Z" fill="#dcdcdc"/><path d="M1489 144.2H1498.8L1493.9 149.4Z" fill="#dcdcdc"/><path d="M1517 78.6H1512.2V110.8H1517M1534 110.8H1538.8V96" fill="none" stroke="#d6d6d6" stroke-width="1.3"/><rect x="1519" y="83" width="13" height="9.2" fill="#4f7da6" stroke="#76b6e6" stroke-width="1"/><circle cx="1525.4" cy="102.4" r="6.3" fill="#737884" stroke="#a9adb5" stroke-width="1.1"/><path d="M1549.27 86.67L1543.37 85.97L1544.07 91.87L1540.4 87.2L1536.73 91.87L1537.43 85.97L1531.53 86.67L1536.2 83L1531.53 79.33L1537.43 80.03L1536.73 74.13L1540.4 78.8L1544.07 74.13L1543.37 80.03L1549.27 79.33L1544.6 83Z" fill="#ffd06b"/><text x="1510.7" y="131.3" font-size="15" fill="#e8e8e8" textLength="39.4" lengthAdjust="spacingAndGlyphs">Group</text><rect x="1562" y="77" width="7.4" height="6.2" fill="#4f7da6" stroke="#76b6e6" stroke-width="1"/><circle cx="1565.6" cy="88.4" r="3.6" fill="#737884" stroke="#a9adb5" stroke-width="1"/><path d="M1572.4 74.4H1575.8V93.4H1572.4" fill="none" stroke="#d6d6d6" stroke-width="1.2"/><path d="M1572.6 80.6L1579.4 87.4M1579.4 80.6L1572.6 87.4" fill="none" stroke="#e8424f" stroke-width="1.8"/><path d="M1563.4 105.6H1560.4V122.6H1563.4M1568.6 105.6H1571.6V116" fill="none" stroke="#d6d6d6" stroke-width="1.2"/><rect x="1563.2" y="108.4" width="5.4" height="4.6" fill="#4f7da6" stroke="#76b6e6" stroke-width="0.9"/><circle cx="1566" cy="117.6" r="2.8" fill="#737884" stroke="#a9adb5" stroke-width="0.9"/><path d="M1570.4 124.6L1573.86 123.82L1578.48 119.21L1575.79 116.52L1571.18 121.14Z" fill="#ffd06b"/><path d="M1578.48 119.21L1580.74 116.94L1578.06 114.26L1575.79 116.52Z" fill="#e0525e"/><path d="M1570.4 124.6L1572.13 124.21L1570.79 122.87Z" fill="#5a4a3a"/><rect x="1556.3" y="132.3" width="28.2" height="26.4" fill="#3f5a78" stroke="#6ab7e8" stroke-width="1.2"/><path d="M1565 137H1561.6V154.6H1565M1570.4 137H1573.8V141.5" fill="none" stroke="#d6d6d6" stroke-width="1.2"/><rect x="1564.4" y="139.6" width="5.4" height="4.6" fill="#3e7d5a" stroke="#6fd08b" stroke-width="0.9"/><circle cx="1567.2" cy="148.6" r="2.8" fill="#3e7d5a" stroke="#6fd08b" stroke-width="0.9"/><g transform="translate(1571.6 144.4) scale(0.95)"><path d="M0 0L0 11L2.6 8.6L4.6 13L6.4 12.2L4.4 7.9H7.8Z" fill="#f4f4f4" stroke="#3b4453" stroke-width="0.5"/></g><rect x="1616.2" y="87.4" width="35.8" height="8.4" fill="#ffd06b"/><line x1="1619.2" y1="87.4" x2="1619.2" y2="90" stroke="#b8892f" stroke-width="0.9"/><line x1="1622.2" y1="87.4" x2="1622.2" y2="91.4" stroke="#b8892f" stroke-width="0.9"/><line x1="1625.2" y1="87.4" x2="1625.2" y2="90" stroke="#b8892f" stroke-width="0.9"/><line x1="1628.2" y1="87.4" x2="1628.2" y2="91.4" stroke="#b8892f" stroke-width="0.9"/><line x1="1631.2" y1="87.4" x2="1631.2" y2="90" stroke="#b8892f" stroke-width="0.9"/><line x1="1634.2" y1="87.4" x2="1634.2" y2="91.4" stroke="#b8892f" stroke-width="0.9"/><line x1="1637.2" y1="87.4" x2="1637.2" y2="90" stroke="#b8892f" stroke-width="0.9"/><line x1="1640.2" y1="87.4" x2="1640.2" y2="91.4" stroke="#b8892f" stroke-width="0.9"/><line x1="1643.2" y1="87.4" x2="1643.2" y2="90" stroke="#b8892f" stroke-width="0.9"/><line x1="1646.2" y1="87.4" x2="1646.2" y2="91.4" stroke="#b8892f" stroke-width="0.9"/><line x1="1649.2" y1="87.4" x2="1649.2" y2="90" stroke="#b8892f" stroke-width="0.9"/><text x="1606.5" y="132.6" font-size="15" fill="#e8e8e8" textLength="55.3" lengthAdjust="spacingAndGlyphs">Measure</text><path d="M1631.2 140.9H1637.5L1634.35 144.9Z" fill="#dcdcdc"/><path d="M1686.4 80.4L1690.8 74.2L1689.4 78.4H1692.6L1687.6 84.6L1688.8 80.4Z" fill="#ffc648"/><rect x="1689.6" y="82" width="12" height="11.6" fill="#eef2f6"/><rect x="1691.6" y="84.4" width="1.4" height="1.4" fill="#3a87c8"/><line x1="1694" y1="85" x2="1699.8" y2="85" stroke="#3a87c8" stroke-width="1.2"/><rect x="1691.6" y="87.4" width="1.4" height="1.4" fill="#3a87c8"/><line x1="1694" y1="88" x2="1699.8" y2="88" stroke="#3a87c8" stroke-width="1.2"/><rect x="1691.6" y="90.4" width="1.4" height="1.4" fill="#3a87c8"/><line x1="1694" y1="91" x2="1699.8" y2="91" stroke="#3a87c8" stroke-width="1.2"/><g transform="translate(1681 80.6) scale(0.95)"><path d="M0 0L0 11L2.6 8.6L4.6 13L6.4 12.2L4.4 7.9H7.8Z" fill="#f4f4f4" stroke="#3b4453" stroke-width="0.5"/></g><rect x="1681.6" y="105.6" width="17.4" height="17.4" fill="none" stroke="#58b274" stroke-width="1.1" stroke-dasharray="2.4 1.2"/><rect x="1688" y="107.6" width="9.4" height="9.4" fill="#6fce8a"/><rect x="1684" y="111.6" width="9.4" height="9.4" fill="#5dbd79" stroke="#8fe0a6" stroke-width="1"/><rect x="1688.6" y="108.2" width="8.8" height="8.8" fill="#6fce8a"/><g transform="translate(1693 113.4) scale(0.95)"><path d="M0 0L0 11L2.6 8.6L4.6 13L6.4 12.2L4.4 7.9H7.8Z" fill="#f4f4f4" stroke="#3b4453" stroke-width="0.5"/></g><rect x="1683.2" y="135.8" width="14.6" height="20.2" fill="#d2d2d2"/><rect x="1685.2" y="137.8" width="10.6" height="4" fill="#6a6e76"/><rect x="1685.2" y="144" width="2.8" height="2.6" fill="#6a6e76"/><rect x="1689" y="144" width="2.8" height="2.6" fill="#6a6e76"/><rect x="1692.8" y="144" width="2.8" height="2.6" fill="#6a6e76"/><rect x="1685.2" y="147.8" width="2.8" height="2.6" fill="#6a6e76"/><rect x="1689" y="147.8" width="2.8" height="2.6" fill="#6a6e76"/><rect x="1692.8" y="147.8" width="2.8" height="2.6" fill="#6a6e76"/><rect x="1685.2" y="151.6" width="2.8" height="2.6" fill="#6a6e76"/><rect x="1689" y="151.6" width="2.8" height="2.6" fill="#6a6e76"/><rect x="1692.8" y="151.6" width="2.8" height="2.6" fill="#6a6e76"/><text x="1727.5" y="133.3" font-size="15" fill="#e8e8e8" textLength="33.2" lengthAdjust="spacingAndGlyphs">Paste</text><path d="M1741.1 142H1747.2L1744.15 146Z" fill="#dcdcdc"/><rect x="1728" y="76.6" width="27.6" height="31" fill="#e5a85c"/><path d="M1735.6 76.8C1735.6 73.6 1738 72.8 1741.8 72.8C1745.6 72.8 1748 73.6 1748 76.8Z" fill="#f1f1f1"/><rect x="1736.4" y="75.4" width="10.8" height="2.2" fill="#f1f1f1"/><path d="M1737 85.2H1752.4L1760.2 93V113H1737Z" fill="#dcdcdc"/><path d="M1752.4 85.2L1760.2 93H1752.4Z" fill="#f6f6f6"/><rect x="1779.8" y="74.2" width="15.2" height="17.6" fill="#cfcfcf"/><line x1="1782" y1="77.6" x2="1792.6" y2="77.6" stroke="#8d9199" stroke-width="1"/><line x1="1782" y1="80.6" x2="1792.6" y2="80.6" stroke="#8d9199" stroke-width="1"/><line x1="1782" y1="83.6" x2="1792.6" y2="83.6" stroke="#8d9199" stroke-width="1"/><line x1="1782" y1="86.6" x2="1792.6" y2="86.6" stroke="#8d9199" stroke-width="1"/><path d="M1788.6 80.4L1798.2 91.2M1799.2 80.8L1790 91.2" fill="none" stroke="#f4f4f4" stroke-width="1.7"/><circle cx="1789.4" cy="92" r="2" fill="none" stroke="#f4f4f4" stroke-width="1.3"/><circle cx="1798.6" cy="92" r="2" fill="none" stroke="#f4f4f4" stroke-width="1.3"/><path d="M1807 83H1813.6L1810.3 87Z" fill="#dcdcdc"/><path d="M1782 105.2H1789.6L1792.4 108V120.4H1782Z" fill="#bdbdbd"/><path d="M1786 109.4H1793.6L1798.2 114V125.2H1786Z" fill="#dcdcdc"/><path d="M1793.6 109.4L1798.2 114H1793.6Z" fill="#f6f6f6"/><path d="M1807 114.1H1813.6L1810.3 118Z" fill="#dcdcdc"/><path d="M1843.8 76.8H1861.2V90.2H1884.2V106.8H1843.8Z" fill="#e1e1e1"/><text x="1848.5" y="132.6" font-size="15" fill="#e8e8e8" textLength="30.4" lengthAdjust="spacingAndGlyphs">Base</text><path d="M1860.9 140H1867.2L1864.05 143.9Z" fill="#dcdcdc"/></g>
<g id="filetabs"><line x1="20.8" y1="214.2" x2="28.8" y2="195.4" stroke="#4b5363" stroke-width="1.2"/><text x="39.6" y="211.4" font-size="15" fill="#e4e4e4" textLength="30.2" lengthAdjust="spacingAndGlyphs">Start</text><path d="M79.2 221L90.6 191.2H305.2L293.8 221Z" fill="#3b4453"/><text x="100.6" y="211.4" font-size="15" fill="#ffffff" font-weight="bold" textLength="168.6" lengthAdjust="spacingAndGlyphs">figuras_tridimensionais*</text><path d="M281.4 202.6L290 211M290 202.6L281.4 211" fill="none" stroke="#b4b8be" stroke-width="2"/><path d="M324.8 199V213.2M317.6 206.1H332" fill="none" stroke="#f2f2f2" stroke-width="2.2"/><line x1="345.8" y1="215.2" x2="353.8" y2="196" stroke="#4b5363" stroke-width="1.2"/><rect x="1842" y="244" width="13.2" height="3.6" fill="#ececec"/><path d="M1870.6 239.2V236.6H1879.2V245.4H1876.4" fill="none" stroke="#ececec" stroke-width="1.6"/><rect x="1867.6" y="240" width="8.6" height="8.4" fill="none" stroke="#ececec" stroke-width="2"/><path d="M1892.4 238.4L1902.6 247.4M1902.6 238.4L1892.4 247.4" fill="none" stroke="#ececec" stroke-width="2.6"/><text x="12.9" y="245.4" font-size="15" fill="#e2e2e2" textLength="20" lengthAdjust="spacingAndGlyphs">[−]</text><text x="34.4" y="245.4" font-size="15" fill="#e2e2e2" textLength="93.1" lengthAdjust="spacingAndGlyphs">[Custom View]</text><text x="129.2" y="245.4" font-size="15" fill="#e2e2e2" textLength="46.4" lengthAdjust="spacingAndGlyphs">[X-Ray]</text></g>
<g id="drawing"><g shape-rendering="crispEdges"><polygon points="389.4,572.4 633.9,539.4 802.7,607.5 663.3,683.9 406.7,663" fill="#126468"/><polygon points="633.9,539.4 772.5,462.8 1029.4,484.7 1046.8,574 802.7,607.5" fill="#126468"/><polygon points="802.7,607.5 1058,629.1 1077.3,718.5 831.4,752.3 663.3,683.9" fill="#126468"/><ellipse cx="844.8" cy="585.2" rx="248.5" ry="203.7" transform="rotate(-115.32 844.8 585.2)" fill="none" stroke="#22e6e8" stroke-width="1"/><ellipse cx="855" cy="629.3" rx="252" ry="178.8" transform="rotate(-67.56 855 629.3)" fill="none" stroke="#22e6e8" stroke-width="1"/><line x1="6" y1="1041.2" x2="1503.5" y2="226.5" stroke="#22e6e8" stroke-width="1"/><line x1="846.5" y1="337" x2="846.5" y2="584.5" stroke="#22e6e8" stroke-width="1.1"/><line x1="846.5" y1="584.5" x2="1058" y2="629.1" stroke="#22e6e8" stroke-width="1"/><polygon points="389.4,572.4 633.9,539.4 802.7,607.5 663.3,683.9 406.7,663" fill="none" stroke="#ffffff" stroke-width="1"/><polygon points="633.9,539.4 772.5,462.8 1029.4,484.7 1046.8,574 802.7,607.5" fill="none" stroke="#ffffff" stroke-width="1"/><polygon points="802.7,607.5 1058,629.1 1077.3,718.5 831.4,752.3 663.3,683.9" fill="none" stroke="#ffffff" stroke-width="1"/><line x1="663.3" y1="683.9" x2="802.7" y2="607.5" stroke="#8ff2f2" stroke-width="1"/></g><line x1="410.5" y1="390" x2="410.5" y2="489.5" stroke="#6f6fd0" stroke-width="1.1"/><line x1="376.8" y1="455.3" x2="479.8" y2="461.4" stroke="#c86a66" stroke-width="1.1"/><line x1="402.7" y1="467.5" x2="428" y2="433.9" stroke="#8fc84a" stroke-width="1.1"/><rect x="407.4" y="453.8" width="6.2" height="6.2" fill="#212830" stroke="#f4f4f4" stroke-width="1.1"/><defs><linearGradient id="g_gz" x1="0" x2="1"><stop offset="0" stop-color="#3f67b0"/><stop offset=".5" stop-color="#6c93d6"/><stop offset="1" stop-color="#3f67b0"/></linearGradient><linearGradient id="g_gx" x1="0" x2="0" y1="0" y2="1"><stop offset="0" stop-color="#e89a96"/><stop offset=".5" stop-color="#d9716d"/><stop offset="1" stop-color="#a94d4a"/></linearGradient></defs><defs><linearGradient id="g_gy" x1="0" x2="1" y1="0" y2="0.6"><stop offset="0" stop-color="#5a9a3c"/><stop offset="1" stop-color="#2f6e2a"/></linearGradient></defs><path d="M410.6 659L417.6 642.6A3.1 3.1 0 0 1 423.4 645L416.4 661.6Z" fill="url(#g_gy)"/><path d="M404 607.2L407.3 603.8L410.8 607.2V663.4H404Z" fill="url(#g_gz)"/><g transform="translate(407.4 662.2) rotate(5.1)"><path d="M0 -3.2L57 -3.2L60.6 0L57 3.4L0 3.4Z" fill="url(#g_gx)"/></g><path d="M404 659.4H410.8V662.4L404 664.6Z" fill="#466fb8"/><path d="M404 586.8H419.6L404.6 601.4H420.4" fill="none" stroke="#1a6fe0" stroke-width="1.6"/><path d="M419.2 622.8L426.6 630.6L433.8 622.8M426.6 630.6V638" fill="none" stroke="#2faa2f" stroke-width="1.1"/><path d="M461.6 648.2L477 663M477 648.2L461.6 663" fill="none" stroke="#c25a50" stroke-width="1.1"/></g>
<g id="viewcube"><defs><radialGradient id="vcsh" cx="0.5" cy="0.5" r="0.5"><stop offset="0" stop-color="#171c24"/><stop offset="0.7" stop-color="#1a2028"/><stop offset="1" stop-color="#212830"/></radialGradient></defs><ellipse cx="1821.5" cy="387.5" rx="77.6" ry="30" fill="#3f4751"/><ellipse cx="1821.5" cy="385.5" rx="62" ry="20.6" fill="url(#vcsh)"/><path d="M1784 329.3L1800.6 314.3L1853.1 317.7L1842.6 333.8Z" fill="#a6a8ac"/><path d="M1842.6 333.8L1853.1 317.7L1852.4 370.6L1841.4 390.1Z" fill="#8d9096"/><path d="M1784 329.3L1842.6 333.8L1841.4 390.1L1785.5 383.3Z" fill="#9b9da2"/><path d="M1794.6 341.3L1830.6 343.4L1830.4 378L1795 374.4Z" fill="#8f959e"/><path d="M1784 329.3L1842.6 333.8M1842.6 333.8L1841.4 390.1M1842.6 333.8L1853.1 317.7" fill="none" stroke="#5a6068" stroke-width="0.9" stroke-dasharray="4 2.4"/><g transform="translate(1793 365.6) skewY(2.6)"><text x="0" y="0" font-size="18.6" fill="#4c5262" font-weight="bold" textLength="40.4" lengthAdjust="spacingAndGlyphs">FRONT</text></g><g transform="translate(1809.4 324.8) skewX(-38) rotate(3.5)"><text x="0" y="0" font-size="7" fill="#5a606c" font-weight="bold" textLength="17" lengthAdjust="spacingAndGlyphs">TOP</text></g><g transform="translate(1844.4 360.6) skewY(-58)"><text x="0" y="0" font-size="10" fill="#5a606c" font-weight="bold" textLength="6.8" lengthAdjust="spacingAndGlyphs">W</text></g><g transform="translate(1739.6 378.2) skewX(-50) scale(1.68 0.86)"><text x="0" y="0" font-size="14" fill="#c6c9ce" font-weight="bold">W</text></g><g transform="translate(1882.6 391.8) skewX(16) scale(1.7 0.92)"><text x="0" y="0" font-size="14" fill="#c6c9ce" font-weight="bold">E</text></g><g transform="translate(1787.6 418.2) skewX(-24) scale(1.95 1.0)"><text x="0" y="0" font-size="14" fill="#c6c9ce" font-weight="bold">S</text></g><rect x="1791.6" y="452.4" width="55.6" height="20.2" fill="#8b8e9b" rx="4.5"/><text x="1796.2" y="467" font-size="12.5" fill="#686d7e" textLength="28.4" lengthAdjust="spacingAndGlyphs">WCS</text><path d="M1833.6 459.4H1841.6L1837.6 464.4Z" fill="#9a9dab" stroke="#777c8c" stroke-width="0.8"/><rect x="1872.8" y="503.9" width="40.4" height="258.8" fill="#50565f" rx="4"/><circle cx="1906.4" cy="509.6" r="3.4" fill="#484e57" stroke="#40464f" stroke-width="0.9"/><path d="M1904.8 508L1908 511.2M1908 508L1904.8 511.2" fill="none" stroke="#40464f" stroke-width="0.8"/><circle cx="1906.2" cy="754.4" r="3.4" fill="#484e57" stroke="#40464f" stroke-width="0.9"/><line x1="1904.4" y1="754.4" x2="1908" y2="754.4" stroke="#40464f" stroke-width="0.9"/><line x1="1875" y1="521.6" x2="1911" y2="521.6" stroke="#565c65" stroke-width="0.8"/><line x1="1875" y1="573.2" x2="1911" y2="573.2" stroke="#565c65" stroke-width="0.8"/><line x1="1875" y1="660.2" x2="1911" y2="660.2" stroke="#565c65" stroke-width="0.8"/><line x1="1875" y1="706.2" x2="1911" y2="706.2" stroke="#565c65" stroke-width="0.8"/><path d="M1879.4 538A13.2 13.2 0 0 0 1905.8 538V527.4H1892.6A13.2 13.2 0 0 0 1879.4 538Z" fill="none" stroke="#40464f" stroke-width="1.5"/><circle cx="1892.6" cy="538.2" r="7.6" fill="none" stroke="#40464f" stroke-width="1.5"/><circle cx="1892.6" cy="538.2" r="4.6" fill="#4a5059" stroke="#40464f" stroke-width="1"/><path d="M1889.6 561.8H1896.8L1893.2 565.2Z" fill="#40464f"/><path d="M1886 596.6L1881 590.6C1880 588.8 1882.4 587.4 1884 589L1886.6 591.6V580.6C1886.6 578.6 1889.6 578.6 1889.6 580.6V587V578.2C1889.6 576.2 1892.6 576.2 1892.6 578.2V587V579C1892.6 577 1895.6 577 1895.6 579V588V581.6C1895.6 579.8 1898.6 579.8 1898.6 581.6V588.4L1901.6 584.6C1903 583 1905.4 584.4 1904.4 586.4L1899.6 599.6C1898.6 602.4 1896.6 604 1893.6 604H1891.6C1888.6 604 1887.2 602 1886 596.6Z" fill="none" stroke="#40464f" stroke-width="1.5" stroke-linejoin="round"/><path d="M1879.4 612.4L1891.8 624.8M1891.8 612.4L1879.4 624.8" fill="none" stroke="#40464f" stroke-width="1.4"/><path d="M1878.6 611.6H1883.6L1878.6 616.6ZM1892.6 611.6H1887.6L1892.6 616.6ZM1878.6 625.6H1883.6L1878.6 620.6Z" fill="#40464f"/><circle cx="1897.6" cy="630.6" r="5.2" fill="none" stroke="#40464f" stroke-width="1.5"/><line x1="1901.4" y1="634.6" x2="1906.8" y2="640" stroke="#40464f" stroke-width="2.6" stroke-linecap="round"/><path d="M1889.6 648.2H1896.8L1893.2 651.6Z" fill="#40464f"/><path d="M1890.6 686V667.6H1887.6L1892.8 660L1898 667.6H1895V686Z" fill="none" stroke="#40464f" stroke-width="1.3"/><ellipse cx="1892.8" cy="675.6" rx="13" ry="4.6" fill="none" stroke="#40464f" stroke-width="1.4"/><path d="M1879.6 677.8L1886.2 674.6V681.4Z" fill="#40464f"/><path d="M1889.6 695.8H1896.8L1893.2 699.2Z" fill="#40464f"/><rect x="1878.8" y="711.4" width="7.2" height="6.6" fill="none" stroke="#40464f" stroke-width="1.2"/><rect x="1888.8" y="711.4" width="7.2" height="6.6" fill="none" stroke="#40464f" stroke-width="1.2"/><rect x="1898.8" y="711.4" width="7.2" height="6.6" fill="none" stroke="#40464f" stroke-width="1.2"/><rect x="1878.8" y="721.4" width="19.6" height="16.6" fill="none" stroke="#40464f" stroke-width="1.3"/><path d="M1884.4 725.2L1893.6 729.8L1884.4 734.4Z" fill="#40464f"/></g>
<g id="cmdline"><rect x="475" y="1003.4" width="320" height="18.8" fill="#575b60" rx="3"/><text x="477.6" y="1017.8" font-size="15" fill="#ececec" class="mono" textLength="313.7" lengthAdjust="spacingAndGlyphs">Command:  &lt;Object Snap Tracking on&gt;</text><path d="M400 1027.6H468V1059.6H396.4V1031.2A3.6 3.6 0 0 1 400 1027.6Z" fill="#272d38"/><path d="M472 1027.6H1525.5V1059.6H468V1031.6A4 4 0 0 1 472 1027.6Z" fill="#c3c4c5"/><rect x="401.4" y="1033.6" width="1.6" height="1.5" fill="#cfcfcf"/><rect x="404.6" y="1033.6" width="1.6" height="1.5" fill="#cfcfcf"/><rect x="401.4" y="1036.5" width="1.6" height="1.5" fill="#cfcfcf"/><rect x="404.6" y="1036.5" width="1.6" height="1.5" fill="#cfcfcf"/><rect x="401.4" y="1039.4" width="1.6" height="1.5" fill="#cfcfcf"/><rect x="404.6" y="1039.4" width="1.6" height="1.5" fill="#cfcfcf"/><rect x="401.4" y="1042.3" width="1.6" height="1.5" fill="#cfcfcf"/><rect x="404.6" y="1042.3" width="1.6" height="1.5" fill="#cfcfcf"/><rect x="401.4" y="1045.2" width="1.6" height="1.5" fill="#cfcfcf"/><rect x="404.6" y="1045.2" width="1.6" height="1.5" fill="#cfcfcf"/><rect x="401.4" y="1048.1" width="1.6" height="1.5" fill="#cfcfcf"/><rect x="404.6" y="1048.1" width="1.6" height="1.5" fill="#cfcfcf"/><rect x="401.4" y="1051" width="1.6" height="1.5" fill="#cfcfcf"/><rect x="404.6" y="1051" width="1.6" height="1.5" fill="#cfcfcf"/><rect x="401.4" y="1053.9" width="1.6" height="1.5" fill="#cfcfcf"/><rect x="404.6" y="1053.9" width="1.6" height="1.5" fill="#cfcfcf"/><path d="M415.6 1037.4L426.4 1047.4M426.4 1037.4L415.6 1047.4" fill="none" stroke="#d4d4d4" stroke-width="2.2"/><path d="M443.4 1051.6L453 1042" fill="none" stroke="#cfcfcf" stroke-width="3.4" stroke-linecap="round"/><path d="M461.6 1037.2A5.6 5.6 0 1 1 457.4 1033.8L454.6 1037.6L456.4 1040.6L460 1040.2Z" fill="#cfcfcf"/><rect x="473.6" y="1036.8" width="18.4" height="13.4" fill="#c3c4c5" stroke="#4e5258" stroke-width="1.2"/><rect x="473.6" y="1036.8" width="18.4" height="3" fill="#4e5258"/><path d="M476 1042.6L478.2 1044.4L476 1046.2M479.4 1046.6H483" fill="none" stroke="#4e5258" stroke-width="0.9"/><path d="M495 1042H504.4L499.7 1047Z" fill="#4e5258"/><text x="513.8" y="1048.8" font-size="15" fill="#6e6e6e" class="mono" font-style="italic" textLength="125" lengthAdjust="spacingAndGlyphs">Type a command</text><path d="M1512 1047L1516.4 1041.8L1520.8 1047Z" fill="#45484d"/><text x="1504" y="1054" font-size="26" fill="#ffffff" textLength="193.5" lengthAdjust="spacingAndGlyphs" fill-opacity="0.45">Ativar o Windows</text><text x="1504" y="1081" font-size="18.4" fill="#ffffff" textLength="336" lengthAdjust="spacingAndGlyphs" fill-opacity="0.42">Aceda a Definições para ativar o Windows.</text><path d="M30 1066.2H104.2L91.7 1095.8H18.3Z" fill="#3b4453"/><text x="39.5" y="1086.7" font-size="15" fill="#ffffff" font-weight="bold" textLength="43.3" lengthAdjust="spacingAndGlyphs">Model</text><text x="113.3" y="1086.7" font-size="15" fill="#e4e4e4" textLength="17.2" lengthAdjust="spacingAndGlyphs">A3</text><text x="161.3" y="1086.7" font-size="15" fill="#e4e4e4" textLength="51.2" lengthAdjust="spacingAndGlyphs">Layout2</text><line x1="141.7" y1="1090.8" x2="149.5" y2="1071.3" stroke="#4b5363" stroke-width="1.2"/><line x1="224.2" y1="1090.8" x2="232" y2="1071.3" stroke="#4b5363" stroke-width="1.2"/><line x1="273.8" y1="1090.8" x2="281.6" y2="1071.3" stroke="#4b5363" stroke-width="1.2"/><path d="M252.8 1074V1088.6M245.4 1081.3H260.2" fill="none" stroke="#f2f2f2" stroke-width="2.2"/></g>
<g id="statusbar"><rect x="1174.2" y="1103" width="58.8" height="29.6" fill="#3b4453"/><rect x="1236" y="1103" width="80" height="29.6" fill="#3b4453"/><rect x="1318.8" y="1103" width="161.2" height="29.6" fill="#3b4453"/><rect x="1482" y="1103" width="27.6" height="29.6" fill="#3b4453"/><rect x="1511.6" y="1103" width="49" height="29.6" fill="#3b4453"/><rect x="1564" y="1103" width="132" height="29.6" fill="#3b4453"/><rect x="1699" y="1103" width="50" height="29.6" fill="#3b4453"/><rect x="1750.6" y="1103" width="29.4" height="29.6" fill="#3b4453"/><rect x="1783" y="1103" width="30.5" height="29.6" fill="#3b4453"/><rect x="1817" y="1103" width="33.5" height="29.6" fill="#3b4453"/><rect x="1854" y="1103" width="60" height="29.6" fill="#3b4453"/><rect x="1380.8" y="1103" width="28.2" height="29.6" fill="#5b8fc9"/><rect x="1482" y="1103" width="27.6" height="29.6" fill="#5b8fc9"/><rect x="1511.6" y="1103" width="28" height="29.6" fill="#5b8fc9"/><rect x="1564" y="1103" width="29" height="29.6" fill="#5b8fc9"/><line x1="1349.2" y1="1103" x2="1349.2" y2="1132.6" stroke="#2f3743" stroke-width="1"/><text x="1178.8" y="1123.6" font-size="15" fill="#f4f4f4" textLength="50" lengthAdjust="spacingAndGlyphs">MODEL</text><path d="M1246 1108.4V1126.6M1251 1108.4V1126.6M1256 1108.4V1126.6M1241.4 1112.6H1260.2M1241.4 1117.6H1260.2M1241.4 1122.6H1260.2" fill="none" stroke="#f0f0f0" stroke-width="1.3"/><rect x="1272.8" y="1110.4" width="2.6" height="2.6" fill="#f0f0f0"/><rect x="1278.8" y="1110.4" width="2.6" height="2.6" fill="#f0f0f0"/><rect x="1284.8" y="1110.4" width="2.6" height="2.6" fill="#f0f0f0"/><rect x="1272.8" y="1116.4" width="2.6" height="2.6" fill="#f0f0f0"/><rect x="1278.8" y="1116.4" width="2.6" height="2.6" fill="#f0f0f0"/><rect x="1284.8" y="1116.4" width="2.6" height="2.6" fill="#f0f0f0"/><rect x="1272.8" y="1122.4" width="2.6" height="2.6" fill="#f0f0f0"/><rect x="1278.8" y="1122.4" width="2.6" height="2.6" fill="#f0f0f0"/><rect x="1284.8" y="1122.4" width="2.6" height="2.6" fill="#f0f0f0"/><path d="M1300.6 1114.8H1310.6L1305.6 1120.2Z" fill="#dcdcdc"/><path d="M1328.6 1111V1120M1324 1115.5H1333.2" fill="none" stroke="#f0f0f0" stroke-width="1.2"/><rect x="1331" y="1120.2" width="13" height="5.4" fill="#f0f0f0"/><rect x="1332.4" y="1121.4" width="2.2" height="3" fill="#3b4453"/><path d="M1355.6 1108.4V1127H1374.8" fill="none" stroke="#f0f0f0" stroke-width="1.3"/><path d="M1355.6 1121.4H1361V1127" fill="none" stroke="#f0f0f0" stroke-width="1.1"/><circle cx="1394.4" cy="1117.8" r="8.4" fill="none" stroke="#f0f0f0" stroke-width="1.3"/><path d="M1394.4 1117.8H1405.4M1394.4 1117.8L1402.4 1109.8" fill="none" stroke="#f0f0f0" stroke-width="1.3"/><path d="M1414 1114.8H1424.6L1419.3 1120.2Z" fill="#dcdcdc"/><line x1="1445.4" y1="1108.2" x2="1445.4" y2="1126.6" stroke="#5fcf7a" stroke-width="1.2"/><line x1="1436.6" y1="1109" x2="1453.4" y2="1125.4" stroke="#d0505a" stroke-width="1.2"/><rect x="1443.8" y="1115.6" width="3.2" height="3.2" fill="#3b4453" stroke="#f0f0f0" stroke-width="0.9"/><path d="M1465 1114.8H1475L1470 1120.2Z" fill="#dcdcdc"/><path d="M1486.2 1124.6H1505.6M1487.6 1122.4L1503.2 1109.4" fill="none" stroke="#f0f0f0" stroke-width="1.3"/><rect x="1492" y="1115.4" width="3.8" height="3.8" fill="#f0f0f0"/><rect x="1517.6" y="1109.6" width="18.2" height="17.6" fill="none" stroke="#f0f0f0" stroke-width="1.4"/><rect x="1515.4" y="1107.6" width="5.2" height="5.2" fill="#5b8fc9" stroke="#f0f0f0" stroke-width="1.2"/><path d="M1545.4 1114.8H1555.6L1550.5 1120.2Z" fill="#dcdcdc"/><path d="M1576.6 1108.4L1579.8 1119.6L1585.2 1127L1576.6 1122.6L1568 1127L1573.4 1119.6Z" fill="#f0f0f0"/><circle cx="1586.2" cy="1111" r="2.6" fill="none" stroke="#f0f0f0" stroke-width="1.1"/><path d="M1607.6 1108.4L1610.8 1119.6L1616.2 1127L1607.6 1122.6L1599 1127L1604.4 1119.6Z" fill="#e4e4e4"/><path d="M1615.6 1107L1612.6 1111.6H1615L1613.2 1115.6L1617.8 1110.2H1615.2L1617.4 1107Z" fill="#e4e4e4"/><path d="M1638.8 1108.4L1642 1119.6L1647.4 1127L1638.8 1122.6L1630.2 1127L1635.6 1119.6Z" fill="#e4e4e4"/><text x="1660.3" y="1124.2" font-size="15" fill="#f4f4f4" textLength="16.2" lengthAdjust="spacingAndGlyphs">1:1</text><path d="M1681.2 1114.8H1691.2L1686.2 1120.2Z" fill="#dcdcdc"/><path d="M1718.38 1107.99L1719.77 1112.23L1724.01 1113.62L1722 1117.6L1724.01 1121.58L1719.77 1122.97L1718.38 1127.21L1714.4 1125.2L1710.42 1127.21L1709.03 1122.97L1704.79 1121.58L1706.8 1117.6L1704.79 1113.62L1709.03 1112.23L1710.42 1107.99L1714.4 1110Z" fill="#e4e4e4"/><circle cx="1714.4" cy="1117.6" r="7.6" fill="#e4e4e4"/><circle cx="1714.4" cy="1117.6" r="3.2" fill="#3b4453"/><path d="M1734 1114.8H1744L1739 1120.2Z" fill="#dcdcdc"/><path d="M1764.6 1108.6V1126.6M1755 1117.6H1774.2" fill="none" stroke="#f0f0f0" stroke-width="2.4"/><rect x="1789" y="1108.8" width="6.4" height="6.4" fill="none" stroke="#f0f0f0" stroke-width="1.2"/><circle cx="1803.8" cy="1116.6" r="4" fill="none" stroke="#f0f0f0" stroke-width="1.2"/><path d="M1795.6 1120.4L1799.8 1127H1791.4Z" fill="none" stroke="#f0f0f0" stroke-width="1.2"/><path d="M1822 1108H1838L1844.4 1113.4V1124H1822Z" fill="#4878c8"/><path d="M1826.4 1106.6V1118M1821.4 1111.4H1833" fill="none" stroke="#f4f4f4" stroke-width="1.2"/><rect x="1821.4" y="1119.6" width="9" height="6.6" fill="#f2b632"/><path d="M1832.6 1122L1836.4 1126L1845 1117.4" fill="none" stroke="#3fb55a" stroke-width="2.8"/><rect x="1859.6" y="1110.6" width="18.6" height="13.6" fill="none" stroke="#f0f0f0" stroke-width="1.2"/><path d="M1869.4 1116.8L1874.6 1112.8M1871.6 1112.6H1875V1115.8M1868 1118.4L1863 1122.2M1862.8 1119.2V1122.4H1866" fill="none" stroke="#f0f0f0" stroke-width="1.1"/><rect x="1889.2" y="1109" width="19.8" height="2.6" fill="#f0f0f0"/><rect x="1889.2" y="1116.4" width="19.8" height="2.6" fill="#f0f0f0"/><rect x="1889.2" y="1123.8" width="19.8" height="2.6" fill="#f0f0f0"/></g>
<g id="taskbar"><defs><linearGradient id="g_sun" x1="0" y1="0" x2="0.4" y2="1"><stop offset="0" stop-color="#f7b02c"/><stop offset="1" stop-color="#ef6f1c"/></linearGradient><linearGradient id="g_win" x1="0" y1="0" x2="1" y2="1"><stop offset="0" stop-color="#56c8fa"/><stop offset="1" stop-color="#0b6fd0"/></linearGradient><linearGradient id="g_edge" x1="0.1" y1="0.9" x2="0.9" y2="0.15"><stop offset="0" stop-color="#0c59a4"/><stop offset="0.45" stop-color="#1e90dc"/><stop offset="0.75" stop-color="#35c1c8"/><stop offset="1" stop-color="#6be36f"/></linearGradient><linearGradient id="g_cop1" x1="0.3" y1="0" x2="0.4" y2="1"><stop offset="0" stop-color="#1f74e0"/><stop offset="0.4" stop-color="#2bb7a8"/><stop offset="0.7" stop-color="#b9d23a"/><stop offset="1" stop-color="#f5a524"/></linearGradient><linearGradient id="g_cop2" x1="0.6" y1="0" x2="0.4" y2="1"><stop offset="0" stop-color="#9b5cf6"/><stop offset="0.45" stop-color="#e85fb0"/><stop offset="0.8" stop-color="#f6705a"/><stop offset="1" stop-color="#f79a3a"/></linearGradient><linearGradient id="g_pho" x1="0" y1="0" x2="0" y2="1"><stop offset="0" stop-color="#2b7fe0"/><stop offset="1" stop-color="#1a5fc4"/></linearGradient></defs><circle cx="40" cy="1168.8" r="12.6" fill="url(#g_sun)"/><circle cx="48.8" cy="1157.6" r="9.6" fill="#c42b1c"/><text x="46.2" y="1162.4" font-size="13" fill="#ffffff" font-weight="bold">1</text><text x="64.5" y="1164.6" font-size="15" fill="#1b1b1b" textLength="31" lengthAdjust="spacingAndGlyphs">24°C</text><text x="65" y="1184.3" font-size="15" fill="#5a5a5a" textLength="20" lengthAdjust="spacingAndGlyphs">Sol</text><rect x="447" y="1156.4" width="13.8" height="13.6" fill="url(#g_win)" rx="1"/><rect x="462.4" y="1156.4" width="13.8" height="13.6" fill="url(#g_win)" rx="1"/><rect x="447" y="1171.6" width="13.8" height="13.6" fill="url(#g_win)" rx="1"/><rect x="462.4" y="1171.6" width="13.8" height="13.6" fill="url(#g_win)" rx="1"/><rect x="494" y="1150.6" width="272" height="38" fill="#eef4f6" rx="19" stroke="#c9d2d6" stroke-width="1"/><circle cx="515.8" cy="1168.8" r="6.6" fill="none" stroke="#1f1f1f" stroke-width="2"/><line x1="520.6" y1="1173.8" x2="525.6" y2="1178.8" stroke="#1f1f1f" stroke-width="2.2" stroke-linecap="round"/><text x="540" y="1177" font-size="17.6" fill="#464646" textLength="63.8" lengthAdjust="spacingAndGlyphs">Procurar</text><defs><linearGradient id="g_tv" x1="0" y1="0" x2="0" y2="1"><stop offset="0" stop-color="#ffffff"/><stop offset="1" stop-color="#e6e9ea"/></linearGradient><linearGradient id="g_tv2" x1="0" y1="0" x2="1" y2="1"><stop offset="0" stop-color="#d8d8d8"/><stop offset="1" stop-color="#9a9a9a"/></linearGradient></defs><rect x="790.6" y="1156.2" width="21.8" height="18.8" fill="url(#g_tv)" rx="1.6"/><rect x="783" y="1163.8" width="22.6" height="20" fill="#1f2021" rx="2.4"/><rect x="790.6" y="1163.8" width="15" height="11.2" fill="url(#g_tv2)"/><path d="M837.6 1159.4A2 2 0 0 1 839.6 1157.4H848L851 1160.4H866A2 2 0 0 1 868 1162.4V1166H837.6Z" fill="#e8a51f"/><rect x="837.6" y="1161.4" width="30.4" height="22.4" fill="#fdd251" rx="2"/><path d="M843.6 1175.6A2 2 0 0 1 845.6 1173.6H860A2 2 0 0 1 862 1175.6V1183.8H843.6Z" fill="#1976d2"/><rect x="848.6" y="1177.4" width="8.4" height="1.8" fill="#0d57a8" rx=".9"/><rect x="848.8" y="1190.6" width="7.6" height="3.2" fill="#868686" rx="1.6"/><circle cx="908" cy="1170" r="15.1" fill="url(#g_edge)"/><path d="M893.4 1172.6C896 1164.6 903 1160.4 910 1161.6C905 1163.6 902.6 1168 904 1173C905.6 1178.6 911 1182 917 1181.2C913 1184.6 906 1185.6 900.6 1183C896 1180.6 893.6 1177 893.4 1172.6Z" fill="#1565b8"/><path d="M906.4 1170.4C907.4 1166.4 911.4 1164.4 915 1165.8C918.6 1167.2 919.6 1170.6 918 1173.4C919.8 1174.6 922 1173.6 923 1172C922.6 1176.6 919.6 1180.2 915.6 1181C910 1181.6 905.6 1176.6 906.4 1170.4Z" fill="#e4ecf0"/><circle cx="900.2" cy="1175.4" r="3.4" fill="#8f8f92"/><path d="M894.2 1184.6C894.2 1180.6 896.8 1179.6 900.2 1179.6C903.6 1179.6 906.2 1180.6 906.2 1184.6C902.6 1186.2 897.8 1186.2 894.2 1184.6Z" fill="#9a9a9d"/><rect x="903.8" y="1190.6" width="8.2" height="3.2" fill="#868686" rx="1.6"/><path d="M957.6 1156.2H967.4C970.2 1156.2 971.6 1157.8 970.6 1160.6L964 1179.2C963.2 1181.4 961.6 1182.4 959.4 1182.4H951.6C948.8 1182.4 947.6 1180.6 948.6 1177.8L954 1159.4C954.6 1157.2 955.8 1156.2 957.6 1156.2Z" fill="url(#g_cop1)"/><path d="M968.6 1162.6H974.4C977.6 1162.6 978.8 1164.6 977.8 1167.4L973.4 1180C972.6 1182.2 971 1183.4 968.8 1183.4H958.6C961.2 1183 962.8 1181.6 963.6 1179.2Z" fill="url(#g_cop2)"/><path d="M960.4 1166.6L963.6 1160.6C964.6 1158.8 966 1158.4 967.2 1159.4L968.6 1162.6L964.6 1174.4Z" fill="#1a4fc0" fill-opacity="0.55"/><path d="M1010.6 1161V1158.6A2.6 2.6 0 0 1 1013.2 1156H1021.6A2.6 2.6 0 0 1 1024.2 1158.6V1161" fill="none" stroke="#4aa3e6" stroke-width="2"/><rect x="1002.6" y="1160.6" width="29.6" height="24.6" fill="#0f4c8a" rx="3.4"/><rect x="1011.4" y="1166.6" width="5.6" height="5.6" fill="#f25022"/><rect x="1017.8" y="1166.6" width="5.6" height="5.6" fill="#7fba00"/><rect x="1011.4" y="1173" width="5.6" height="5.6" fill="#00a4ef"/><rect x="1017.8" y="1173" width="5.6" height="5.6" fill="#ffb900"/><path d="M1058.6 1184.6L1060.8 1177A13.4 13.4 0 1 1 1066 1182.2Z" fill="none" stroke="#1f8a4c" stroke-width="2.6" stroke-linejoin="round"/><path d="M1066.6 1164.2C1067.6 1162.6 1069 1162.8 1069.6 1164L1070.8 1166.6C1071 1167.4 1070 1168.4 1069.6 1169C1070.8 1171.6 1072.6 1173.2 1075 1174.2C1075.8 1173.4 1076.4 1172.4 1077.2 1172.6L1080 1174C1080.8 1174.6 1080.6 1176 1079.4 1177C1077.6 1178.4 1075 1178 1072.4 1176.6C1069.4 1175 1067 1172.4 1066 1169.4C1065.4 1167.4 1065.6 1165.6 1066.6 1164.2Z" fill="#1f8a4c"/><rect x="1071" y="1148.8" width="26" height="21.2" fill="#1279d8" rx="10.6"/><text x="1076" y="1164.4" font-size="14" fill="#ffffff" textLength="16.4" lengthAdjust="spacingAndGlyphs">76</text><rect x="1103" y="1145" width="49.6" height="49.6" fill="#f1b9b6" rx="5"/><defs><linearGradient id="g_op" x1="0" y1="0" x2="1" y2="1"><stop offset="0" stop-color="#f2303c"/><stop offset="1" stop-color="#c4101e"/></linearGradient></defs><path fill-rule="evenodd" fill="url(#g_op)" d="M1113.6 1169.6A14.2 14.4 0 1 0 1142 1169.6A14.2 14.4 0 1 0 1113.6 1169.6ZM1121 1169.6A6.4 10.6 0 1 1 1133.8 1169.6A6.4 10.6 0 1 1 1121 1169.6Z"/><rect x="1108" y="1190.6" width="39.6" height="3.4" fill="#d7281f" rx="1.7"/><rect x="1169.6" y="1157" width="26.4" height="26.2" fill="url(#g_pho)" rx="4"/><path d="M1169.6 1179L1182 1166.4L1196 1180.4A4 4 0 0 1 1192 1183.2H1173.6A4 4 0 0 1 1169.6 1179Z" fill="#5cb6f2"/><path d="M1176 1183.2L1186.6 1172.4L1196 1181.8A4 4 0 0 1 1192 1183.2Z" fill="#9ad4fb"/><circle cx="1189.6" cy="1162.6" r="2.2" fill="#e8f3fc"/><rect x="1178.8" y="1190.6" width="8.2" height="3.2" fill="#868686" rx="1.6"/><path d="M1237.8 1170L1225.16 1162.7A14.6 14.6 0 0 1 1250.44 1162.7Z" fill="#e33b2e"/><path d="M1237.8 1170L1250.44 1162.7A14.6 14.6 0 0 1 1237.8 1184.6Z" fill="#fbc116"/><path d="M1237.8 1170L1237.8 1184.6A14.6 14.6 0 0 1 1225.16 1162.7Z" fill="#2da94f"/><circle cx="1237.8" cy="1170" r="6.8" fill="#f4f4f4"/><circle cx="1237.8" cy="1170" r="5.4" fill="#2f7de1"/><circle cx="1248.8" cy="1158.8" r="9.6" fill="#5a3a2a"/><circle cx="1249" cy="1158" r="4.6" fill="#d9a07c"/><path d="M1241.6 1164C1243 1160 1255 1160 1256.2 1164C1254 1167.6 1244 1167.6 1241.6 1164Z" fill="#c78a68"/><rect x="1233.8" y="1190.6" width="8.2" height="3.2" fill="#868686" rx="1.6"/><rect x="1277.8" y="1155.2" width="29.6" height="29.6" fill="#b5121b" stroke="#8d0d14" stroke-width="1.4" stroke-dasharray="1.6 1.2"/><text x="1281.6" y="1180.2" font-size="25" fill="#ffffff" font-weight="bold" font-style="italic" textLength="22.8" lengthAdjust="spacingAndGlyphs">Fz</text><rect x="1288.8" y="1190.6" width="8.2" height="3.2" fill="#868686" rx="1.6"/><defs><linearGradient id="g_npp" x1="0" y1="0" x2="0" y2="1"><stop offset="0" stop-color="#fbfdf4"/><stop offset="0.45" stop-color="#c9ea70"/><stop offset="1" stop-color="#4fb82a"/></linearGradient></defs><path d="M1334 1157H1350.6L1356.6 1162.6V1182.8H1334Z" fill="url(#g_npp)" stroke="#c9cfc0" stroke-width="0.6"/><path d="M1350.6 1157L1356.6 1162.6H1350.6Z" fill="#eef2e2"/><ellipse cx="1344.4" cy="1171" rx="6.6" ry="5.2" fill="#3f9a28"/><circle cx="1342.2" cy="1166.6" r="2.3" fill="#d8f0a0" stroke="#2f6e1c" stroke-width="0.8"/><circle cx="1347.2" cy="1166.2" r="2.3" fill="#d8f0a0" stroke="#2f6e1c" stroke-width="0.8"/><path d="M1338.6 1172.4C1341 1170 1346 1170.6 1348.6 1173M1340 1176.4H1350" fill="none" stroke="#1f5212" stroke-width="1"/><path d="M1353 1174.8L1360.4 1156.8L1362.2 1157.6L1354.8 1175.6L1352.8 1176.8Z" fill="#d9a32e"/><rect x="1343.8" y="1190.6" width="8.2" height="3.2" fill="#868686" rx="1.6"/><rect x="1388" y="1155.6" width="21" height="21.4" fill="#e9edf3" rx="2.4"/><path d="M1392.4 1170.2V1159.8H1403.8" fill="none" stroke="#cf3f14" stroke-width="2.6" stroke-dasharray="2.6 1.9"/><rect x="1394.6" y="1162" width="9.6" height="9.6" fill="#f6f8fa"/><path d="M1405.4 1161.4V1173M1394.2 1172.8H1410.4" fill="none" stroke="#8e959c" stroke-width="2.2"/><path d="M1405.4 1173L1404.4 1179.4M1406 1172.8L1412 1171.4" fill="none" stroke="#2b93e6" stroke-width="2"/><circle cx="1414.6" cy="1171" r="2.5" fill="none" stroke="#2b93e6" stroke-width="1.9"/><circle cx="1404" cy="1182.2" r="2.9" fill="none" stroke="#2b93e6" stroke-width="2"/><rect x="1399" y="1190.6" width="8.2" height="3.2" fill="#868686" rx="1.6"/><rect x="1434" y="1146.2" width="48.2" height="48.2" fill="#f6ece7" rx="5"/><path d="M1451.4 1156.4L1455 1155H1469.4L1472 1157.6V1182.4L1469.6 1184.6H1451.4Z" fill="#8c0f30"/><path d="M1444.4 1159L1448.4 1155.6H1467.6A2.4 2.4 0 0 1 1470 1158V1177.6H1448.4L1444.4 1177.4Z" fill="#e2134a"/><path d="M1444.4 1159L1448.4 1155.6V1177.6L1444.4 1177.4Z" fill="#ef4f74"/><path d="M1447 1176H1471.6V1182.4L1469.6 1184.6H1449.4A2.4 2.4 0 0 1 1447 1182.2Z" fill="#8c0f30"/><text x="1453.8" y="1171.4" font-size="16" fill="#ffffff" font-weight="bold" textLength="10.6" lengthAdjust="spacingAndGlyphs">A</text><text x="1453.2" y="1181.8" font-size="6.2" fill="#ffffff" font-weight="bold" textLength="11.8" lengthAdjust="spacingAndGlyphs">CAD</text><rect x="1448" y="1190.2" width="20.2" height="3.8" fill="#0a73d6" rx="1.9"/><path d="M1681.6 1173.4L1688 1166.8L1694.4 1173.4" fill="none" stroke="#1b1b1b" stroke-width="1.7"/><circle cx="1727.8" cy="1175.8" r="1.6" fill="#1b1b1b"/><path d="M1724.14 1172.19A5 5 0 0 1 1731.46 1172.19" fill="none" stroke="#1b1b1b" stroke-width="1.4"/><path d="M1721.22 1169.46A9 9 0 0 1 1734.38 1169.46" fill="none" stroke="#1b1b1b" stroke-width="1.4"/><path d="M1718.29 1166.73A13 13 0 0 1 1737.31 1166.73" fill="none" stroke="#1b1b1b" stroke-width="1.4"/><path d="M1748.6 1167.6H1752L1756.6 1163.4V1177.6L1752 1173.4H1748.6Z" fill="none" stroke="#1b1b1b" stroke-width="1.4" stroke-linejoin="round"/><path d="M1759.4 1166.6A5.4 5.4 0 0 1 1759.4 1174.4M1762 1164A9 9 0 0 1 1762 1177" fill="none" stroke="#1b1b1b" stroke-width="1.3"/><path d="M1764.8 1161.8A12.4 12.4 0 0 1 1764.8 1179.2" fill="none" stroke="#9a9a9a" stroke-width="1.1"/><rect x="1778.6" y="1164.6" width="16.4" height="11.4" fill="none" rx="3" stroke="#1b1b1b" stroke-width="1.4"/><rect x="1795.4" y="1168" width="2.4" height="4.6" fill="#1b1b1b" rx="1"/><rect x="1781" y="1167" width="5" height="6.6" fill="#1b1b1b" rx="1"/><text x="1860.6" y="1165.2" font-size="15" fill="#1b1b1b" textLength="34.9" lengthAdjust="spacingAndGlyphs">12:26</text><text x="1819.4" y="1185.2" font-size="15" fill="#1b1b1b" textLength="76.1" lengthAdjust="spacingAndGlyphs">10/10/2025</text></g>
</svg>
</body></html>
